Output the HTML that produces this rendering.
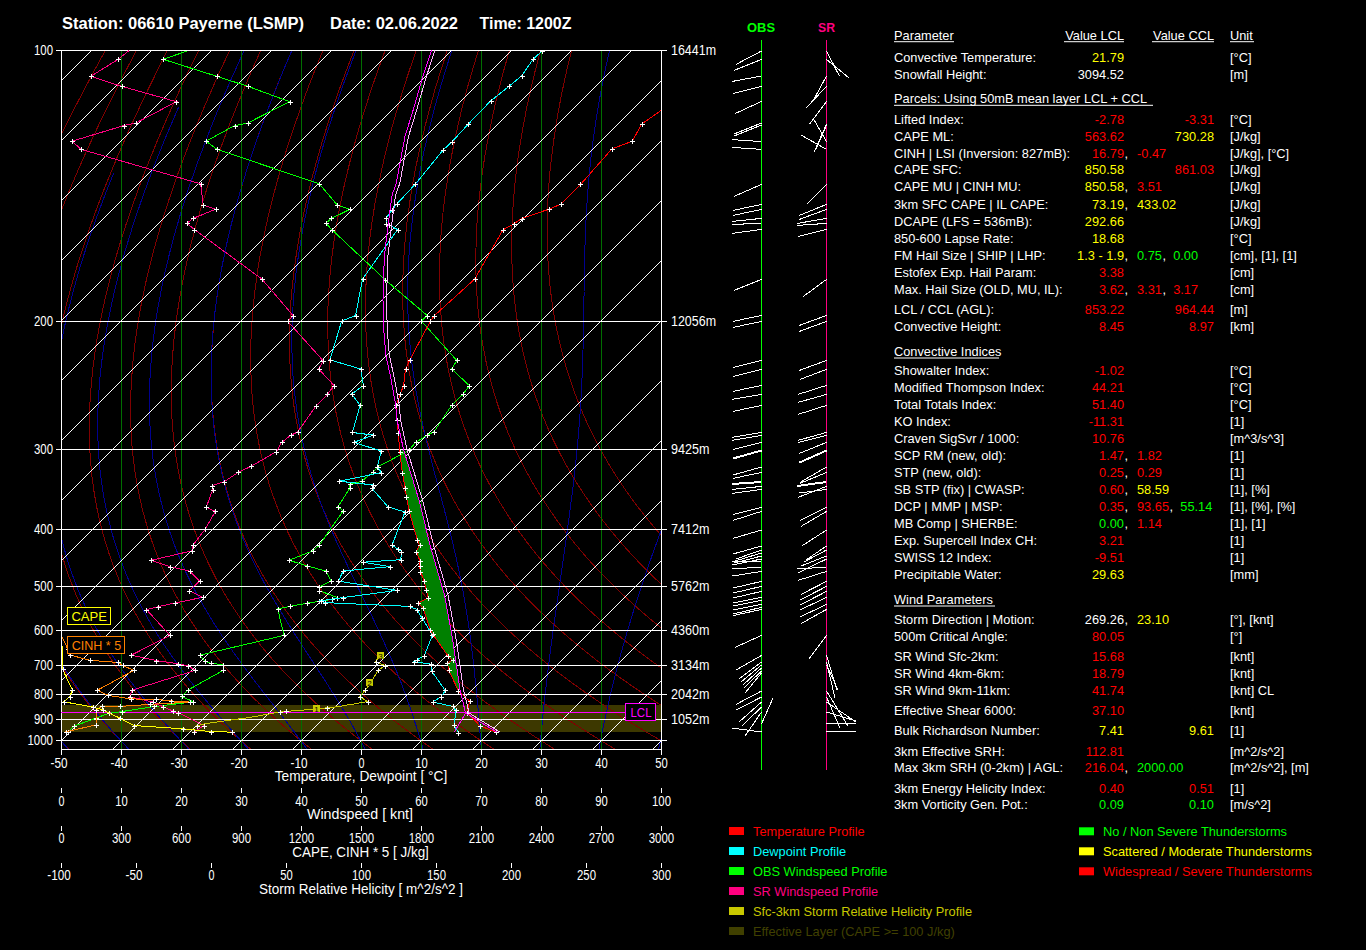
<!DOCTYPE html><html><head><meta charset="utf-8"><style>html,body{margin:0;padding:0;background:#000;width:1366px;height:950px;overflow:hidden;position:relative}</style></head><body><svg width="1366" height="950" viewBox="0 0 1366 950" style="position:absolute;left:0;top:0">
<defs><clipPath id="pc"><rect x="61" y="50" width="600" height="699.5"/></clipPath></defs>
<rect x="0" y="0" width="1366" height="950" fill="#000"/>
<g clip-path="url(#pc)" shape-rendering="crispEdges">
<rect x="61" y="705" width="600" height="27" fill="#3d3800"/>
<polyline points="118.4,27.1 105.9,49.4 94.5,70.3 84.1,89.8 74.5,108.3 65.7,125.6 57.6,142.1 50.2,157.6 43.3,172.4 37,186.5 31.1,199.9 25.6,212.7 20.6,224.9 15.9,236.6 11.5,247.8 7.5,258.6 3.7,268.9 0.2,278.9 -3.1,288.5 -6.1,297.7 -9,306.6 -11.6,315.2 -14,323.5 -16.3,331.6 -18.4,339.4 -20.4,346.9 -22.2,354.3 -23.9,361.4 -25.5,368.3 -26.9,375 -28.3,381.5 -29.5,387.8 -30.7,394 -31.7,400 -32.7,405.8 -33.6,411.5 -34.3,417.1 -35.1,422.5 -35.7,427.8 -36.3,433 -36.8,438 -37.3,443 -37.7,447.8 -38,452.5 -38.3,457.1 -38.6,461.7 -38.8,466.1 -38.9,470.4 -39.1,474.7 -39.1,478.8 -39.2,482.9 -39.2,486.9 -39.1,490.8 -39,494.7 -38.9,498.5 -38.8,502.2 -38.6,505.8 -38.4,509.4 -38.2,512.9 -37.9,516.4 -37.6,519.8 -37.3,523.1 -37,526.4 -36.7,529.7 -36.3,532.8 -35.9,536 -35.5,539 -35.1,542.1 -34.6,545.1 -34.1,548 -33.7,550.9 -33.2,553.8 -32.7,556.6 -32.1,559.3 -31.6,562.1 -31,564.8 -30.5,567.4 -29.9,570 -29.3,572.6 -28.7,575.2 -28.1,577.7 -27.4,580.1 -26.8,582.6 -26.1,585 -25.5,587.4 -24.8,589.7 -24.1,592.1 -23.4,594.4 -22.7,596.6 -22,598.9 -21.3,601.1 -20.6,603.3 -19.9,605.4 -19.2,607.6 -18.4,609.7 -17.7,611.8 -16.9,613.8 -16.2,615.9 -15.4,617.9 -14.6,619.9 -13.9,621.8 -13.1,623.8 -12.3,625.7 -11.5,627.6 -10.7,629.5 -9.9,631.4 -9.1,633.2 -8.3,635.1 -7.5,636.9 -6.7,638.7 -5.9,640.4 -5,642.2 -4.2,643.9 -3.4,645.7 -2.6,647.4 -1.7,649.1 -0.9,650.7 -0.1,652.4 0.8,654 1.6,655.7 2.5,657.3 3.3,658.9 4.2,660.5 5,662 5.9,663.6 6.7,665.1 7.6,666.7 8.4,668.2 9.3,669.7 10.2,671.2 11,672.6 11.9,674.1 12.8,675.5 13.6,677 14.5,678.4 15.4,679.8 16.2,681.2 17.1,682.6 18,684 18.8,685.4 19.7,686.7 20.6,688.1 21.5,689.4 22.3,690.7 23.2,692.1 24.1,693.4 25,694.7 25.9,696 26.7,697.2 27.6,698.5 28.5,699.8 29.4,701 30.2,702.3 31.1,703.5 32,704.7 32.9,705.9 33.8,707.1 34.6,708.3 35.5,709.5 36.4,710.7 37.3,711.9 38.2,713 39,714.2 39.9,715.3 40.8,716.5 41.7,717.6 42.6,718.7 43.4,719.8 44.3,721 45.2,722.1 46.1,723.2 46.9,724.2 47.8,725.3 48.7,726.4 49.6,727.5 50.4,728.5 51.3,729.6 52.2,730.6 53.1,731.7 53.9,732.7 54.8,733.7 55.7,734.8 56.6,735.8 57.4,736.8 58.3,737.8 59.2,738.8 60,739.8 60.9,740.8 61.8,741.8 62.7,742.7 63.5,743.7 64.4,744.7 65.2,745.6 66.1,746.6 67,747.5 67.8,748.5 68.7,749.4 69.6,750.3 70.4,751.3 71.3,752.2" fill="none" stroke="#800000" stroke-width="1" />
<polyline points="149.1,27.1 137,49.4 126,70.3 116,89.8 106.8,108.3 98.4,125.6 90.7,142.1 83.6,157.6 77.1,172.4 71.1,186.5 65.5,199.9 60.4,212.7 55.7,224.9 51.3,236.6 47.2,247.8 43.5,258.6 40,268.9 36.8,278.9 33.8,288.5 31,297.7 28.5,306.6 26.1,315.2 23.9,323.5 21.9,331.6 20.1,339.4 18.3,346.9 16.8,354.3 15.3,361.4 14,368.3 12.8,375 11.6,381.5 10.6,387.8 9.7,394 8.9,400 8.2,405.8 7.5,411.5 6.9,417.1 6.4,422.5 5.9,427.8 5.6,433 5.3,438 5,443 4.8,447.8 4.6,452.5 4.5,457.1 4.5,461.7 4.5,466.1 4.5,470.4 4.6,474.7 4.7,478.8 4.8,482.9 5,486.9 5.2,490.8 5.5,494.7 5.8,498.5 6.1,502.2 6.4,505.8 6.8,509.4 7.2,512.9 7.6,516.4 8.1,519.8 8.5,523.1 9,526.4 9.5,529.7 10.1,532.8 10.6,536 11.2,539 11.8,542.1 12.4,545.1 13,548 13.6,550.9 14.3,553.8 14.9,556.6 15.6,559.3 16.3,562.1 17,564.8 17.7,567.4 18.4,570 19.2,572.6 19.9,575.2 20.7,577.7 21.5,580.1 22.2,582.6 23,585 23.8,587.4 24.6,589.7 25.4,592.1 26.3,594.4 27.1,596.6 27.9,598.9 28.8,601.1 29.6,603.3 30.5,605.4 31.3,607.6 32.2,609.7 33.1,611.8 33.9,613.8 34.8,615.9 35.7,617.9 36.6,619.9 37.5,621.8 38.4,623.8 39.3,625.7 40.2,627.6 41.1,629.5 42,631.4 43,633.2 43.9,635.1 44.8,636.9 45.7,638.7 46.7,640.4 47.6,642.2 48.6,643.9 49.5,645.7 50.4,647.4 51.4,649.1 52.3,650.7 53.3,652.4 54.2,654 55.2,655.7 56.1,657.3 57.1,658.9 58.1,660.5 59,662 60,663.6 60.9,665.1 61.9,666.7 62.9,668.2 63.8,669.7 64.8,671.2 65.8,672.6 66.7,674.1 67.7,675.5 68.7,677 69.6,678.4 70.6,679.8 71.6,681.2 72.6,682.6 73.5,684 74.5,685.4 75.5,686.7 76.5,688.1 77.4,689.4 78.4,690.7 79.4,692.1 80.4,693.4 81.3,694.7 82.3,696 83.3,697.2 84.3,698.5 85.2,699.8 86.2,701 87.2,702.3 88.1,703.5 89.1,704.7 90.1,705.9 91.1,707.1 92,708.3 93,709.5 94,710.7 95,711.9 95.9,713 96.9,714.2 97.9,715.3 98.8,716.5 99.8,717.6 100.8,718.7 101.7,719.8 102.7,721 103.7,722.1 104.6,723.2 105.6,724.2 106.6,725.3 107.5,726.4 108.5,727.5 109.5,728.5 110.4,729.6 111.4,730.6 112.3,731.7 113.3,732.7 114.3,733.7 115.2,734.8 116.2,735.8 117.1,736.8 118.1,737.8 119,738.8 120,739.8 120.9,740.8 121.9,741.8 122.8,742.7 123.8,743.7 124.7,744.7 125.7,745.6 126.6,746.6 127.6,747.5 128.5,748.5 129.5,749.4 130.4,750.3 131.4,751.3 132.3,752.2" fill="none" stroke="#800000" stroke-width="1" />
<polyline points="179.7,27.1 168,49.4 157.5,70.3 147.9,89.8 139.1,108.3 131.1,125.6 123.8,142.1 117,157.6 110.9,172.4 105.2,186.5 100,199.9 95.2,212.7 90.8,224.9 86.7,236.6 83,247.8 79.5,258.6 76.3,268.9 73.4,278.9 70.7,288.5 68.2,297.7 65.9,306.6 63.8,315.2 61.9,323.5 60.2,331.6 58.5,339.4 57.1,346.9 55.7,354.3 54.5,361.4 53.4,368.3 52.5,375 51.6,381.5 50.8,387.8 50.1,394 49.5,400 49,405.8 48.5,411.5 48.2,417.1 47.9,422.5 47.6,427.8 47.5,433 47.3,438 47.3,443 47.3,447.8 47.3,452.5 47.4,457.1 47.5,461.7 47.7,466.1 47.9,470.4 48.2,474.7 48.5,478.8 48.8,482.9 49.2,486.9 49.6,490.8 50,494.7 50.5,498.5 51,502.2 51.5,505.8 52,509.4 52.6,512.9 53.2,516.4 53.8,519.8 54.4,523.1 55.1,526.4 55.7,529.7 56.4,532.8 57.1,536 57.8,539 58.6,542.1 59.3,545.1 60.1,548 60.9,550.9 61.7,553.8 62.5,556.6 63.3,559.3 64.2,562.1 65,564.8 65.9,567.4 66.7,570 67.6,572.6 68.5,575.2 69.4,577.7 70.3,580.1 71.2,582.6 72.2,585 73.1,587.4 74,589.7 75,592.1 75.9,594.4 76.9,596.6 77.9,598.9 78.8,601.1 79.8,603.3 80.8,605.4 81.8,607.6 82.8,609.7 83.8,611.8 84.8,613.8 85.8,615.9 86.8,617.9 87.8,619.9 88.8,621.8 89.9,623.8 90.9,625.7 91.9,627.6 93,629.5 94,631.4 95,633.2 96.1,635.1 97.1,636.9 98.2,638.7 99.2,640.4 100.3,642.2 101.3,643.9 102.4,645.7 103.4,647.4 104.5,649.1 105.6,650.7 106.6,652.4 107.7,654 108.7,655.7 109.8,657.3 110.9,658.9 111.9,660.5 113,662 114.1,663.6 115.2,665.1 116.2,666.7 117.3,668.2 118.4,669.7 119.4,671.2 120.5,672.6 121.6,674.1 122.7,675.5 123.7,677 124.8,678.4 125.9,679.8 127,681.2 128,682.6 129.1,684 130.2,685.4 131.2,686.7 132.3,688.1 133.4,689.4 134.5,690.7 135.5,692.1 136.6,693.4 137.7,694.7 138.8,696 139.8,697.2 140.9,698.5 142,699.8 143,701 144.1,702.3 145.2,703.5 146.2,704.7 147.3,705.9 148.4,707.1 149.4,708.3 150.5,709.5 151.6,710.7 152.6,711.9 153.7,713 154.8,714.2 155.8,715.3 156.9,716.5 157.9,717.6 159,718.7 160.1,719.8 161.1,721 162.2,722.1 163.2,723.2 164.3,724.2 165.3,725.3 166.4,726.4 167.4,727.5 168.5,728.5 169.5,729.6 170.6,730.6 171.6,731.7 172.7,732.7 173.7,733.7 174.7,734.8 175.8,735.8 176.8,736.8 177.9,737.8 178.9,738.8 179.9,739.8 181,740.8 182,741.8 183,742.7 184.1,743.7 185.1,744.7 186.1,745.6 187.2,746.6 188.2,747.5 189.2,748.5 190.2,749.4 191.3,750.3 192.3,751.3 193.3,752.2" fill="none" stroke="#800000" stroke-width="1" />
<polyline points="210.3,27.1 199.1,49.4 189,70.3 179.8,89.8 171.4,108.3 163.8,125.6 156.8,142.1 150.5,157.6 144.6,172.4 139.3,186.5 134.5,199.9 130,212.7 125.9,224.9 122.1,236.6 118.7,247.8 115.5,258.6 112.7,268.9 110,278.9 107.6,288.5 105.4,297.7 103.4,306.6 101.5,315.2 99.9,323.5 98.4,331.6 97,339.4 95.8,346.9 94.7,354.3 93.8,361.4 92.9,368.3 92.2,375 91.5,381.5 91,387.8 90.5,394 90.1,400 89.8,405.8 89.6,411.5 89.4,417.1 89.3,422.5 89.3,427.8 89.3,433 89.4,438 89.6,443 89.7,447.8 90,452.5 90.3,457.1 90.6,461.7 91,466.1 91.4,470.4 91.8,474.7 92.3,478.8 92.8,482.9 93.4,486.9 93.9,490.8 94.5,494.7 95.2,498.5 95.8,502.2 96.5,505.8 97.2,509.4 98,512.9 98.7,516.4 99.5,519.8 100.3,523.1 101.1,526.4 101.9,529.7 102.8,532.8 103.6,536 104.5,539 105.4,542.1 106.3,545.1 107.2,548 108.2,550.9 109.1,553.8 110.1,556.6 111.1,559.3 112,562.1 113,564.8 114,567.4 115.1,570 116.1,572.6 117.1,575.2 118.2,577.7 119.2,580.1 120.3,582.6 121.3,585 122.4,587.4 123.5,589.7 124.5,592.1 125.6,594.4 126.7,596.6 127.8,598.9 128.9,601.1 130,603.3 131.2,605.4 132.3,607.6 133.4,609.7 134.5,611.8 135.6,613.8 136.8,615.9 137.9,617.9 139.1,619.9 140.2,621.8 141.3,623.8 142.5,625.7 143.6,627.6 144.8,629.5 146,631.4 147.1,633.2 148.3,635.1 149.4,636.9 150.6,638.7 151.8,640.4 152.9,642.2 154.1,643.9 155.3,645.7 156.4,647.4 157.6,649.1 158.8,650.7 160,652.4 161.1,654 162.3,655.7 163.5,657.3 164.7,658.9 165.8,660.5 167,662 168.2,663.6 169.4,665.1 170.5,666.7 171.7,668.2 172.9,669.7 174.1,671.2 175.3,672.6 176.4,674.1 177.6,675.5 178.8,677 180,678.4 181.1,679.8 182.3,681.2 183.5,682.6 184.7,684 185.8,685.4 187,686.7 188.2,688.1 189.4,689.4 190.5,690.7 191.7,692.1 192.9,693.4 194,694.7 195.2,696 196.4,697.2 197.5,698.5 198.7,699.8 199.9,701 201,702.3 202.2,703.5 203.4,704.7 204.5,705.9 205.7,707.1 206.8,708.3 208,709.5 209.2,710.7 210.3,711.9 211.5,713 212.6,714.2 213.8,715.3 214.9,716.5 216.1,717.6 217.2,718.7 218.4,719.8 219.5,721 220.7,722.1 221.8,723.2 222.9,724.2 224.1,725.3 225.2,726.4 226.4,727.5 227.5,728.5 228.6,729.6 229.8,730.6 230.9,731.7 232,732.7 233.1,733.7 234.3,734.8 235.4,735.8 236.5,736.8 237.6,737.8 238.8,738.8 239.9,739.8 241,740.8 242.1,741.8 243.2,742.7 244.4,743.7 245.5,744.7 246.6,745.6 247.7,746.6 248.8,747.5 249.9,748.5 251,749.4 252.1,750.3 253.2,751.3 254.3,752.2" fill="none" stroke="#800000" stroke-width="1" />
<polyline points="240.9,27.1 230.2,49.4 220.4,70.3 211.7,89.8 203.7,108.3 196.4,125.6 189.9,142.1 183.9,157.6 178.4,172.4 173.4,186.5 168.9,199.9 164.8,212.7 161,224.9 157.6,236.6 154.4,247.8 151.6,258.6 149,268.9 146.6,278.9 144.5,288.5 142.6,297.7 140.8,306.6 139.3,315.2 137.9,323.5 136.6,331.6 135.5,339.4 134.6,346.9 133.7,354.3 133,361.4 132.4,368.3 131.9,375 131.4,381.5 131.1,387.8 130.9,394 130.7,400 130.6,405.8 130.6,411.5 130.7,417.1 130.8,422.5 131,427.8 131.2,433 131.5,438 131.8,443 132.2,447.8 132.7,452.5 133.1,457.1 133.7,461.7 134.2,466.1 134.8,470.4 135.4,474.7 136.1,478.8 136.8,482.9 137.5,486.9 138.3,490.8 139.1,494.7 139.9,498.5 140.7,502.2 141.6,505.8 142.4,509.4 143.3,512.9 144.3,516.4 145.2,519.8 146.2,523.1 147.1,526.4 148.1,529.7 149.1,532.8 150.2,536 151.2,539 152.2,542.1 153.3,545.1 154.4,548 155.5,550.9 156.6,553.8 157.7,556.6 158.8,559.3 159.9,562.1 161.1,564.8 162.2,567.4 163.4,570 164.5,572.6 165.7,575.2 166.9,577.7 168.1,580.1 169.3,582.6 170.5,585 171.7,587.4 172.9,589.7 174.1,592.1 175.3,594.4 176.5,596.6 177.8,598.9 179,601.1 180.3,603.3 181.5,605.4 182.7,607.6 184,609.7 185.2,611.8 186.5,613.8 187.8,615.9 189,617.9 190.3,619.9 191.6,621.8 192.8,623.8 194.1,625.7 195.4,627.6 196.6,629.5 197.9,631.4 199.2,633.2 200.5,635.1 201.7,636.9 203,638.7 204.3,640.4 205.6,642.2 206.9,643.9 208.2,645.7 209.4,647.4 210.7,649.1 212,650.7 213.3,652.4 214.6,654 215.9,655.7 217.2,657.3 218.4,658.9 219.7,660.5 221,662 222.3,663.6 223.6,665.1 224.9,666.7 226.1,668.2 227.4,669.7 228.7,671.2 230,672.6 231.3,674.1 232.6,675.5 233.8,677 235.1,678.4 236.4,679.8 237.7,681.2 238.9,682.6 240.2,684 241.5,685.4 242.8,686.7 244,688.1 245.3,689.4 246.6,690.7 247.9,692.1 249.1,693.4 250.4,694.7 251.7,696 252.9,697.2 254.2,698.5 255.4,699.8 256.7,701 258,702.3 259.2,703.5 260.5,704.7 261.7,705.9 263,707.1 264.2,708.3 265.5,709.5 266.7,710.7 268,711.9 269.2,713 270.5,714.2 271.7,715.3 273,716.5 274.2,717.6 275.4,718.7 276.7,719.8 277.9,721 279.1,722.1 280.4,723.2 281.6,724.2 282.8,725.3 284.1,726.4 285.3,727.5 286.5,728.5 287.7,729.6 288.9,730.6 290.2,731.7 291.4,732.7 292.6,733.7 293.8,734.8 295,735.8 296.2,736.8 297.4,737.8 298.6,738.8 299.8,739.8 301,740.8 302.2,741.8 303.4,742.7 304.6,743.7 305.8,744.7 307,745.6 308.2,746.6 309.4,747.5 310.6,748.5 311.8,749.4 313,750.3 314.1,751.3 315.3,752.2" fill="none" stroke="#800000" stroke-width="1" />
<polyline points="271.6,27.1 261.2,49.4 251.9,70.3 243.6,89.8 236,108.3 229.1,125.6 222.9,142.1 217.3,157.6 212.2,172.4 207.6,186.5 203.4,199.9 199.6,212.7 196.1,224.9 193,236.6 190.1,247.8 187.6,258.6 185.3,268.9 183.2,278.9 181.4,288.5 179.7,297.7 178.3,306.6 177,315.2 175.8,323.5 174.9,331.6 174,339.4 173.3,346.9 172.7,354.3 172.2,361.4 171.8,368.3 171.6,375 171.4,381.5 171.3,387.8 171.3,394 171.3,400 171.5,405.8 171.7,411.5 171.9,417.1 172.3,422.5 172.7,427.8 173.1,433 173.6,438 174.1,443 174.7,447.8 175.3,452.5 176,457.1 176.7,461.7 177.5,466.1 178.3,470.4 179.1,474.7 179.9,478.8 180.8,482.9 181.7,486.9 182.6,490.8 183.6,494.7 184.6,498.5 185.6,502.2 186.6,505.8 187.7,509.4 188.7,512.9 189.8,516.4 190.9,519.8 192,523.1 193.2,526.4 194.3,529.7 195.5,532.8 196.7,536 197.9,539 199.1,542.1 200.3,545.1 201.5,548 202.8,550.9 204,553.8 205.3,556.6 206.5,559.3 207.8,562.1 209.1,564.8 210.4,567.4 211.7,570 213,572.6 214.3,575.2 215.6,577.7 216.9,580.1 218.3,582.6 219.6,585 221,587.4 222.3,589.7 223.7,592.1 225,594.4 226.4,596.6 227.7,598.9 229.1,601.1 230.5,603.3 231.8,605.4 233.2,607.6 234.6,609.7 236,611.8 237.4,613.8 238.7,615.9 240.1,617.9 241.5,619.9 242.9,621.8 244.3,623.8 245.7,625.7 247.1,627.6 248.5,629.5 249.9,631.4 251.3,633.2 252.7,635.1 254.1,636.9 255.5,638.7 256.8,640.4 258.2,642.2 259.6,643.9 261,645.7 262.4,647.4 263.8,649.1 265.2,650.7 266.6,652.4 268,654 269.4,655.7 270.8,657.3 272.2,658.9 273.6,660.5 275,662 276.4,663.6 277.8,665.1 279.2,666.7 280.6,668.2 282,669.7 283.3,671.2 284.7,672.6 286.1,674.1 287.5,675.5 288.9,677 290.3,678.4 291.7,679.8 293,681.2 294.4,682.6 295.8,684 297.2,685.4 298.5,686.7 299.9,688.1 301.3,689.4 302.6,690.7 304,692.1 305.4,693.4 306.7,694.7 308.1,696 309.5,697.2 310.8,698.5 312.2,699.8 313.5,701 314.9,702.3 316.2,703.5 317.6,704.7 318.9,705.9 320.3,707.1 321.6,708.3 323,709.5 324.3,710.7 325.7,711.9 327,713 328.3,714.2 329.7,715.3 331,716.5 332.3,717.6 333.7,718.7 335,719.8 336.3,721 337.6,722.1 338.9,723.2 340.3,724.2 341.6,725.3 342.9,726.4 344.2,727.5 345.5,728.5 346.8,729.6 348.1,730.6 349.4,731.7 350.7,732.7 352,733.7 353.3,734.8 354.6,735.8 355.9,736.8 357.2,737.8 358.5,738.8 359.8,739.8 361.1,740.8 362.4,741.8 363.6,742.7 364.9,743.7 366.2,744.7 367.5,745.6 368.7,746.6 370,747.5 371.3,748.5 372.5,749.4 373.8,750.3 375.1,751.3 376.3,752.2" fill="none" stroke="#800000" stroke-width="1" />
<polyline points="302.2,27.1 292.3,49.4 283.4,70.3 275.4,89.8 268.3,108.3 261.8,125.6 256,142.1 250.7,157.6 246,172.4 241.7,186.5 237.8,199.9 234.3,212.7 231.2,224.9 228.4,236.6 225.9,247.8 223.6,258.6 221.6,268.9 219.8,278.9 218.3,288.5 216.9,297.7 215.7,306.6 214.7,315.2 213.8,323.5 213.1,331.6 212.5,339.4 212,346.9 211.7,354.3 211.4,361.4 211.3,368.3 211.3,375 211.3,381.5 211.4,387.8 211.6,394 211.9,400 212.3,405.8 212.7,411.5 213.2,417.1 213.7,422.5 214.3,427.8 215,433 215.7,438 216.4,443 217.2,447.8 218,452.5 218.9,457.1 219.8,461.7 220.7,466.1 221.7,470.4 222.7,474.7 223.7,478.8 224.8,482.9 225.9,486.9 227,490.8 228.1,494.7 229.3,498.5 230.5,502.2 231.6,505.8 232.9,509.4 234.1,512.9 235.4,516.4 236.6,519.8 237.9,523.1 239.2,526.4 240.5,529.7 241.8,532.8 243.2,536 244.5,539 245.9,542.1 247.3,545.1 248.6,548 250,550.9 251.4,553.8 252.8,556.6 254.3,559.3 255.7,562.1 257.1,564.8 258.5,567.4 260,570 261.4,572.6 262.9,575.2 264.4,577.7 265.8,580.1 267.3,582.6 268.8,585 270.2,587.4 271.7,589.7 273.2,592.1 274.7,594.4 276.2,596.6 277.7,598.9 279.2,601.1 280.7,603.3 282.2,605.4 283.7,607.6 285.2,609.7 286.7,611.8 288.2,613.8 289.7,615.9 291.2,617.9 292.7,619.9 294.3,621.8 295.8,623.8 297.3,625.7 298.8,627.6 300.3,629.5 301.8,631.4 303.3,633.2 304.8,635.1 306.4,636.9 307.9,638.7 309.4,640.4 310.9,642.2 312.4,643.9 313.9,645.7 315.4,647.4 317,649.1 318.5,650.7 320,652.4 321.5,654 323,655.7 324.5,657.3 326,658.9 327.5,660.5 329,662 330.5,663.6 332,665.1 333.5,666.7 335,668.2 336.5,669.7 338,671.2 339.5,672.6 341,674.1 342.5,675.5 343.9,677 345.4,678.4 346.9,679.8 348.4,681.2 349.9,682.6 351.3,684 352.8,685.4 354.3,686.7 355.8,688.1 357.2,689.4 358.7,690.7 360.2,692.1 361.6,693.4 363.1,694.7 364.6,696 366,697.2 367.5,698.5 368.9,699.8 370.4,701 371.8,702.3 373.3,703.5 374.7,704.7 376.2,705.9 377.6,707.1 379,708.3 380.5,709.5 381.9,710.7 383.3,711.9 384.8,713 386.2,714.2 387.6,715.3 389,716.5 390.5,717.6 391.9,718.7 393.3,719.8 394.7,721 396.1,722.1 397.5,723.2 398.9,724.2 400.3,725.3 401.7,726.4 403.1,727.5 404.5,728.5 405.9,729.6 407.3,730.6 408.7,731.7 410.1,732.7 411.5,733.7 412.9,734.8 414.2,735.8 415.6,736.8 417,737.8 418.4,738.8 419.7,739.8 421.1,740.8 422.5,741.8 423.8,742.7 425.2,743.7 426.5,744.7 427.9,745.6 429.3,746.6 430.6,747.5 432,748.5 433.3,749.4 434.6,750.3 436,751.3 437.3,752.2" fill="none" stroke="#800000" stroke-width="1" />
<polyline points="332.8,27.1 323.4,49.4 314.9,70.3 307.3,89.8 300.6,108.3 294.5,125.6 289,142.1 284.1,157.6 279.7,172.4 275.8,186.5 272.3,199.9 269.1,212.7 266.3,224.9 263.8,236.6 261.6,247.8 259.6,258.6 257.9,268.9 256.5,278.9 255.2,288.5 254.1,297.7 253.2,306.6 252.4,315.2 251.8,323.5 251.3,331.6 251,339.4 250.8,346.9 250.7,354.3 250.7,361.4 250.8,368.3 251,375 251.2,381.5 251.6,387.8 252,394 252.5,400 253.1,405.8 253.8,411.5 254.4,417.1 255.2,422.5 256,427.8 256.9,433 257.8,438 258.7,443 259.7,447.8 260.7,452.5 261.8,457.1 262.9,461.7 264,466.1 265.1,470.4 266.3,474.7 267.5,478.8 268.8,482.9 270,486.9 271.3,490.8 272.6,494.7 274,498.5 275.3,502.2 276.7,505.8 278.1,509.4 279.5,512.9 280.9,516.4 282.3,519.8 283.8,523.1 285.2,526.4 286.7,529.7 288.2,532.8 289.7,536 291.2,539 292.7,542.1 294.2,545.1 295.8,548 297.3,550.9 298.9,553.8 300.4,556.6 302,559.3 303.6,562.1 305.1,564.8 306.7,567.4 308.3,570 309.9,572.6 311.5,575.2 313.1,577.7 314.7,580.1 316.3,582.6 317.9,585 319.5,587.4 321.1,589.7 322.8,592.1 324.4,594.4 326,596.6 327.6,598.9 329.3,601.1 330.9,603.3 332.5,605.4 334.2,607.6 335.8,609.7 337.4,611.8 339.1,613.8 340.7,615.9 342.3,617.9 344,619.9 345.6,621.8 347.2,623.8 348.9,625.7 350.5,627.6 352.1,629.5 353.8,631.4 355.4,633.2 357,635.1 358.7,636.9 360.3,638.7 361.9,640.4 363.6,642.2 365.2,643.9 366.8,645.7 368.4,647.4 370.1,649.1 371.7,650.7 373.3,652.4 374.9,654 376.5,655.7 378.2,657.3 379.8,658.9 381.4,660.5 383,662 384.6,663.6 386.2,665.1 387.8,666.7 389.4,668.2 391,669.7 392.6,671.2 394.2,672.6 395.8,674.1 397.4,675.5 399,677 400.6,678.4 402.2,679.8 403.8,681.2 405.3,682.6 406.9,684 408.5,685.4 410.1,686.7 411.6,688.1 413.2,689.4 414.8,690.7 416.3,692.1 417.9,693.4 419.5,694.7 421,696 422.6,697.2 424.1,698.5 425.7,699.8 427.2,701 428.8,702.3 430.3,703.5 431.8,704.7 433.4,705.9 434.9,707.1 436.4,708.3 438,709.5 439.5,710.7 441,711.9 442.5,713 444.1,714.2 445.6,715.3 447.1,716.5 448.6,717.6 450.1,718.7 451.6,719.8 453.1,721 454.6,722.1 456.1,723.2 457.6,724.2 459.1,725.3 460.6,726.4 462.1,727.5 463.5,728.5 465,729.6 466.5,730.6 468,731.7 469.4,732.7 470.9,733.7 472.4,734.8 473.8,735.8 475.3,736.8 476.8,737.8 478.2,738.8 479.7,739.8 481.1,740.8 482.6,741.8 484,742.7 485.5,743.7 486.9,744.7 488.3,745.6 489.8,746.6 491.2,747.5 492.6,748.5 494.1,749.4 495.5,750.3 496.9,751.3 498.3,752.2" fill="none" stroke="#800000" stroke-width="1" />
<polyline points="363.4,27.1 354.4,49.4 346.4,70.3 339.2,89.8 332.9,108.3 327.2,125.6 322.1,142.1 317.6,157.6 313.5,172.4 309.9,186.5 306.7,199.9 303.9,212.7 301.4,224.9 299.2,236.6 297.3,247.8 295.7,258.6 294.3,268.9 293.1,278.9 292.1,288.5 291.2,297.7 290.6,306.6 290.1,315.2 289.8,323.5 289.6,331.6 289.5,339.4 289.5,346.9 289.6,354.3 289.9,361.4 290.2,368.3 290.7,375 291.2,381.5 291.8,387.8 292.4,394 293.2,400 293.9,405.8 294.8,411.5 295.7,417.1 296.7,422.5 297.7,427.8 298.7,433 299.8,438 301,443 302.2,447.8 303.4,452.5 304.6,457.1 305.9,461.7 307.2,466.1 308.6,470.4 310,474.7 311.4,478.8 312.8,482.9 314.2,486.9 315.7,490.8 317.2,494.7 318.7,498.5 320.2,502.2 321.7,505.8 323.3,509.4 324.9,512.9 326.4,516.4 328,519.8 329.7,523.1 331.3,526.4 332.9,529.7 334.6,532.8 336.2,536 337.9,539 339.5,542.1 341.2,545.1 342.9,548 344.6,550.9 346.3,553.8 348,556.6 349.7,559.3 351.4,562.1 353.2,564.8 354.9,567.4 356.6,570 358.3,572.6 360.1,575.2 361.8,577.7 363.6,580.1 365.3,582.6 367.1,585 368.8,587.4 370.6,589.7 372.3,592.1 374.1,594.4 375.8,596.6 377.6,598.9 379.4,601.1 381.1,603.3 382.9,605.4 384.6,607.6 386.4,609.7 388.2,611.8 389.9,613.8 391.7,615.9 393.4,617.9 395.2,619.9 397,621.8 398.7,623.8 400.5,625.7 402.2,627.6 404,629.5 405.7,631.4 407.5,633.2 409.2,635.1 411,636.9 412.7,638.7 414.5,640.4 416.2,642.2 418,643.9 419.7,645.7 421.4,647.4 423.2,649.1 424.9,650.7 426.6,652.4 428.4,654 430.1,655.7 431.8,657.3 433.6,658.9 435.3,660.5 437,662 438.7,663.6 440.4,665.1 442.1,666.7 443.8,668.2 445.6,669.7 447.3,671.2 449,672.6 450.7,674.1 452.4,675.5 454,677 455.7,678.4 457.4,679.8 459.1,681.2 460.8,682.6 462.5,684 464.2,685.4 465.8,686.7 467.5,688.1 469.2,689.4 470.8,690.7 472.5,692.1 474.2,693.4 475.8,694.7 477.5,696 479.1,697.2 480.8,698.5 482.4,699.8 484,701 485.7,702.3 487.3,703.5 489,704.7 490.6,705.9 492.2,707.1 493.8,708.3 495.5,709.5 497.1,710.7 498.7,711.9 500.3,713 501.9,714.2 503.5,715.3 505.1,716.5 506.7,717.6 508.3,718.7 509.9,719.8 511.5,721 513.1,722.1 514.7,723.2 516.3,724.2 517.8,725.3 519.4,726.4 521,727.5 522.6,728.5 524.1,729.6 525.7,730.6 527.2,731.7 528.8,732.7 530.4,733.7 531.9,734.8 533.5,735.8 535,736.8 536.6,737.8 538.1,738.8 539.6,739.8 541.2,740.8 542.7,741.8 544.2,742.7 545.7,743.7 547.3,744.7 548.8,745.6 550.3,746.6 551.8,747.5 553.3,748.5 554.8,749.4 556.3,750.3 557.8,751.3 559.3,752.2" fill="none" stroke="#800000" stroke-width="1" />
<polyline points="394.1,27.1 385.5,49.4 377.9,70.3 371.1,89.8 365.2,108.3 359.8,125.6 355.1,142.1 351,157.6 347.3,172.4 344,186.5 341.2,199.9 338.7,212.7 336.5,224.9 334.7,236.6 333.1,247.8 331.7,258.6 330.6,268.9 329.7,278.9 329,288.5 328.4,297.7 328,306.6 327.8,315.2 327.7,323.5 327.8,331.6 328,339.4 328.2,346.9 328.6,354.3 329.1,361.4 329.7,368.3 330.4,375 331.1,381.5 331.9,387.8 332.8,394 333.8,400 334.8,405.8 335.8,411.5 337,417.1 338.1,422.5 339.4,427.8 340.6,433 341.9,438 343.3,443 344.6,447.8 346.1,452.5 347.5,457.1 349,461.7 350.5,466.1 352,470.4 353.6,474.7 355.2,478.8 356.8,482.9 358.4,486.9 360,490.8 361.7,494.7 363.4,498.5 365.1,502.2 366.8,505.8 368.5,509.4 370.2,512.9 372,516.4 373.8,519.8 375.5,523.1 377.3,526.4 379.1,529.7 380.9,532.8 382.7,536 384.5,539 386.4,542.1 388.2,545.1 390,548 391.9,550.9 393.7,553.8 395.6,556.6 397.4,559.3 399.3,562.1 401.2,564.8 403.1,567.4 404.9,570 406.8,572.6 408.7,575.2 410.6,577.7 412.4,580.1 414.3,582.6 416.2,585 418.1,587.4 420,589.7 421.9,592.1 423.8,594.4 425.7,596.6 427.6,598.9 429.4,601.1 431.3,603.3 433.2,605.4 435.1,607.6 437,609.7 438.9,611.8 440.8,613.8 442.7,615.9 444.5,617.9 446.4,619.9 448.3,621.8 450.2,623.8 452.1,625.7 453.9,627.6 455.8,629.5 457.7,631.4 459.6,633.2 461.4,635.1 463.3,636.9 465.2,638.7 467,640.4 468.9,642.2 470.7,643.9 472.6,645.7 474.4,647.4 476.3,649.1 478.1,650.7 480,652.4 481.8,654 483.7,655.7 485.5,657.3 487.3,658.9 489.2,660.5 491,662 492.8,663.6 494.6,665.1 496.5,666.7 498.3,668.2 500.1,669.7 501.9,671.2 503.7,672.6 505.5,674.1 507.3,675.5 509.1,677 510.9,678.4 512.7,679.8 514.5,681.2 516.3,682.6 518,684 519.8,685.4 521.6,686.7 523.4,688.1 525.1,689.4 526.9,690.7 528.7,692.1 530.4,693.4 532.2,694.7 533.9,696 535.7,697.2 537.4,698.5 539.1,699.8 540.9,701 542.6,702.3 544.3,703.5 546.1,704.7 547.8,705.9 549.5,707.1 551.2,708.3 553,709.5 554.7,710.7 556.4,711.9 558.1,713 559.8,714.2 561.5,715.3 563.2,716.5 564.9,717.6 566.5,718.7 568.2,719.8 569.9,721 571.6,722.1 573.3,723.2 574.9,724.2 576.6,725.3 578.3,726.4 579.9,727.5 581.6,728.5 583.2,729.6 584.9,730.6 586.5,731.7 588.2,732.7 589.8,733.7 591.4,734.8 593.1,735.8 594.7,736.8 596.3,737.8 598,738.8 599.6,739.8 601.2,740.8 602.8,741.8 604.4,742.7 606,743.7 607.6,744.7 609.2,745.6 610.8,746.6 612.4,747.5 614,748.5 615.6,749.4 617.2,750.3 618.8,751.3 620.4,752.2" fill="none" stroke="#800000" stroke-width="1" />
<polyline points="424.7,27.1 416.6,49.4 409.4,70.3 403,89.8 397.5,108.3 392.5,125.6 388.2,142.1 384.4,157.6 381.1,172.4 378.2,186.5 375.6,199.9 373.5,212.7 371.6,224.9 370.1,236.6 368.8,247.8 367.7,258.6 366.9,268.9 366.3,278.9 365.8,288.5 365.6,297.7 365.5,306.6 365.5,315.2 365.7,323.5 366,331.6 366.4,339.4 367,346.9 367.6,354.3 368.3,361.4 369.2,368.3 370.1,375 371,381.5 372.1,387.8 373.2,394 374.4,400 375.6,405.8 376.9,411.5 378.2,417.1 379.6,422.5 381,427.8 382.5,433 384,438 385.6,443 387.1,447.8 388.7,452.5 390.4,457.1 392,461.7 393.7,466.1 395.5,470.4 397.2,474.7 399,478.8 400.8,482.9 402.6,486.9 404.4,490.8 406.2,494.7 408.1,498.5 409.9,502.2 411.8,505.8 413.7,509.4 415.6,512.9 417.5,516.4 419.5,519.8 421.4,523.1 423.4,526.4 425.3,529.7 427.3,532.8 429.2,536 431.2,539 433.2,542.1 435.2,545.1 437.2,548 439.2,550.9 441.2,553.8 443.2,556.6 445.2,559.3 447.2,562.1 449.2,564.8 451.2,567.4 453.2,570 455.3,572.6 457.3,575.2 459.3,577.7 461.3,580.1 463.3,582.6 465.4,585 467.4,587.4 469.4,589.7 471.4,592.1 473.5,594.4 475.5,596.6 477.5,598.9 479.5,601.1 481.5,603.3 483.6,605.4 485.6,607.6 487.6,609.7 489.6,611.8 491.6,613.8 493.6,615.9 495.6,617.9 497.7,619.9 499.7,621.8 501.7,623.8 503.7,625.7 505.7,627.6 507.6,629.5 509.6,631.4 511.6,633.2 513.6,635.1 515.6,636.9 517.6,638.7 519.6,640.4 521.5,642.2 523.5,643.9 525.5,645.7 527.4,647.4 529.4,649.1 531.4,650.7 533.3,652.4 535.3,654 537.2,655.7 539.2,657.3 541.1,658.9 543.1,660.5 545,662 546.9,663.6 548.9,665.1 550.8,666.7 552.7,668.2 554.6,669.7 556.5,671.2 558.4,672.6 560.4,674.1 562.3,675.5 564.2,677 566.1,678.4 567.9,679.8 569.8,681.2 571.7,682.6 573.6,684 575.5,685.4 577.4,686.7 579.2,688.1 581.1,689.4 583,690.7 584.8,692.1 586.7,693.4 588.5,694.7 590.4,696 592.2,697.2 594.1,698.5 595.9,699.8 597.7,701 599.5,702.3 601.4,703.5 603.2,704.7 605,705.9 606.8,707.1 608.6,708.3 610.4,709.5 612.2,710.7 614,711.9 615.8,713 617.6,714.2 619.4,715.3 621.2,716.5 623,717.6 624.8,718.7 626.5,719.8 628.3,721 630.1,722.1 631.8,723.2 633.6,724.2 635.3,725.3 637.1,726.4 638.8,727.5 640.6,728.5 642.3,729.6 644.1,730.6 645.8,731.7 647.5,732.7 649.2,733.7 651,734.8 652.7,735.8 654.4,736.8 656.1,737.8 657.8,738.8 659.5,739.8 661.2,740.8 662.9,741.8 664.6,742.7 666.3,743.7 668,744.7 669.7,745.6 671.4,746.6 673,747.5 674.7,748.5 676.4,749.4 678,750.3 679.7,751.3 681.4,752.2" fill="none" stroke="#800000" stroke-width="1" />
<polyline points="455.3,27.1 447.6,49.4 440.9,70.3 434.9,89.8 429.8,108.3 425.2,125.6 421.3,142.1 417.8,157.6 414.8,172.4 412.3,186.5 410.1,199.9 408.3,212.7 406.7,224.9 405.5,236.6 404.5,247.8 403.8,258.6 403.2,268.9 402.9,278.9 402.7,288.5 402.8,297.7 402.9,306.6 403.2,315.2 403.7,323.5 404.3,331.6 404.9,339.4 405.7,346.9 406.6,354.3 407.6,361.4 408.6,368.3 409.8,375 411,381.5 412.2,387.8 413.6,394 415,400 416.4,405.8 417.9,411.5 419.5,417.1 421.1,422.5 422.7,427.8 424.4,433 426.1,438 427.8,443 429.6,447.8 431.4,452.5 433.3,457.1 435.1,461.7 437,466.1 438.9,470.4 440.8,474.7 442.8,478.8 444.7,482.9 446.7,486.9 448.7,490.8 450.7,494.7 452.8,498.5 454.8,502.2 456.9,505.8 458.9,509.4 461,512.9 463.1,516.4 465.2,519.8 467.3,523.1 469.4,526.4 471.5,529.7 473.6,532.8 475.8,536 477.9,539 480,542.1 482.2,545.1 484.3,548 486.5,550.9 488.6,553.8 490.8,556.6 492.9,559.3 495.1,562.1 497.2,564.8 499.4,567.4 501.5,570 503.7,572.6 505.9,575.2 508,577.7 510.2,580.1 512.4,582.6 514.5,585 516.7,587.4 518.8,589.7 521,592.1 523.2,594.4 525.3,596.6 527.5,598.9 529.6,601.1 531.8,603.3 533.9,605.4 536.1,607.6 538.2,609.7 540.3,611.8 542.5,613.8 544.6,615.9 546.7,617.9 548.9,619.9 551,621.8 553.1,623.8 555.3,625.7 557.4,627.6 559.5,629.5 561.6,631.4 563.7,633.2 565.8,635.1 567.9,636.9 570,638.7 572.1,640.4 574.2,642.2 576.3,643.9 578.4,645.7 580.4,647.4 582.5,649.1 584.6,650.7 586.7,652.4 588.7,654 590.8,655.7 592.8,657.3 594.9,658.9 596.9,660.5 599,662 601,663.6 603.1,665.1 605.1,666.7 607.1,668.2 609.1,669.7 611.2,671.2 613.2,672.6 615.2,674.1 617.2,675.5 619.2,677 621.2,678.4 623.2,679.8 625.2,681.2 627.2,682.6 629.2,684 631.1,685.4 633.1,686.7 635.1,688.1 637.1,689.4 639,690.7 641,692.1 642.9,693.4 644.9,694.7 646.8,696 648.8,697.2 650.7,698.5 652.6,699.8 654.6,701 656.5,702.3 658.4,703.5 660.3,704.7 662.2,705.9 664.1,707.1 666,708.3 667.9,709.5 669.8,710.7 671.7,711.9 673.6,713 675.5,714.2 677.4,715.3 679.2,716.5 681.1,717.6 683,718.7 684.8,719.8 686.7,721 688.6,722.1 690.4,723.2 692.3,724.2 694.1,725.3 695.9,726.4 697.8,727.5 699.6,728.5 701.4,729.6 703.2,730.6 705.1,731.7 706.9,732.7 708.7,733.7 710.5,734.8 712.3,735.8 714.1,736.8 715.9,737.8 717.7,738.8 719.5,739.8 721.3,740.8 723,741.8 724.8,742.7 726.6,743.7 728.4,744.7 730.1,745.6 731.9,746.6 733.6,747.5 735.4,748.5 737.1,749.4 738.9,750.3 740.6,751.3 742.4,752.2" fill="none" stroke="#800000" stroke-width="1" />
<polyline points="485.9,27.1 478.7,49.4 472.4,70.3 466.8,89.8 462,108.3 457.9,125.6 454.3,142.1 451.2,157.6 448.6,172.4 446.4,186.5 444.5,199.9 443,212.7 441.8,224.9 440.9,236.6 440.2,247.8 439.8,258.6 439.5,268.9 439.5,278.9 439.6,288.5 439.9,297.7 440.4,306.6 441,315.2 441.7,323.5 442.5,331.6 443.4,339.4 444.5,346.9 445.6,354.3 446.8,361.4 448.1,368.3 449.5,375 450.9,381.5 452.4,387.8 454,394 455.6,400 457.3,405.8 459,411.5 460.7,417.1 462.5,422.5 464.4,427.8 466.3,433 468.2,438 470.1,443 472.1,447.8 474.1,452.5 476.1,457.1 478.2,461.7 480.3,466.1 482.3,470.4 484.5,474.7 486.6,478.8 488.7,482.9 490.9,486.9 493.1,490.8 495.3,494.7 497.5,498.5 499.7,502.2 501.9,505.8 504.1,509.4 506.4,512.9 508.6,516.4 510.9,519.8 513.2,523.1 515.4,526.4 517.7,529.7 520,532.8 522.3,536 524.6,539 526.8,542.1 529.1,545.1 531.4,548 533.7,550.9 536,553.8 538.3,556.6 540.6,559.3 542.9,562.1 545.2,564.8 547.6,567.4 549.9,570 552.2,572.6 554.5,575.2 556.8,577.7 559.1,580.1 561.4,582.6 563.7,585 566,587.4 568.3,589.7 570.6,592.1 572.8,594.4 575.1,596.6 577.4,598.9 579.7,601.1 582,603.3 584.3,605.4 586.5,607.6 588.8,609.7 591.1,611.8 593.3,613.8 595.6,615.9 597.9,617.9 600.1,619.9 602.4,621.8 604.6,623.8 606.8,625.7 609.1,627.6 611.3,629.5 613.6,631.4 615.8,633.2 618,635.1 620.2,636.9 622.4,638.7 624.6,640.4 626.9,642.2 629.1,643.9 631.3,645.7 633.4,647.4 635.6,649.1 637.8,650.7 640,652.4 642.2,654 644.3,655.7 646.5,657.3 648.7,658.9 650.8,660.5 653,662 655.1,663.6 657.3,665.1 659.4,666.7 661.6,668.2 663.7,669.7 665.8,671.2 667.9,672.6 670,674.1 672.2,675.5 674.3,677 676.4,678.4 678.5,679.8 680.6,681.2 682.6,682.6 684.7,684 686.8,685.4 688.9,686.7 690.9,688.1 693,689.4 695.1,690.7 697.1,692.1 699.2,693.4 701.2,694.7 703.3,696 705.3,697.2 707.3,698.5 709.4,699.8 711.4,701 713.4,702.3 715.4,703.5 717.4,704.7 719.4,705.9 721.4,707.1 723.4,708.3 725.4,709.5 727.4,710.7 729.4,711.9 731.4,713 733.3,714.2 735.3,715.3 737.3,716.5 739.2,717.6 741.2,718.7 743.2,719.8 745.1,721 747,722.1 749,723.2 750.9,724.2 752.8,725.3 754.8,726.4 756.7,727.5 758.6,728.5 760.5,729.6 762.4,730.6 764.3,731.7 766.2,732.7 768.1,733.7 770,734.8 771.9,735.8 773.8,736.8 775.7,737.8 777.5,738.8 779.4,739.8 781.3,740.8 783.1,741.8 785,742.7 786.9,743.7 788.7,744.7 790.6,745.6 792.4,746.6 794.2,747.5 796.1,748.5 797.9,749.4 799.7,750.3 801.6,751.3 803.4,752.2" fill="none" stroke="#800000" stroke-width="1" />
<polyline points="516.6,27.1 509.7,49.4 503.8,70.3 498.7,89.8 494.3,108.3 490.6,125.6 487.4,142.1 484.6,157.6 482.4,172.4 480.5,186.5 479,199.9 477.8,212.7 476.9,224.9 476.3,236.6 476,247.8 475.8,258.6 475.9,268.9 476.1,278.9 476.5,288.5 477.1,297.7 477.8,306.6 478.7,315.2 479.6,323.5 480.7,331.6 481.9,339.4 483.2,346.9 484.6,354.3 486,361.4 487.6,368.3 489.2,375 490.8,381.5 492.6,387.8 494.4,394 496.2,400 498.1,405.8 500,411.5 502,417.1 504,422.5 506.1,427.8 508.1,433 510.3,438 512.4,443 514.6,447.8 516.8,452.5 519,457.1 521.2,461.7 523.5,466.1 525.8,470.4 528.1,474.7 530.4,478.8 532.7,482.9 535.1,486.9 537.4,490.8 539.8,494.7 542.2,498.5 544.6,502.2 547,505.8 549.4,509.4 551.8,512.9 554.2,516.4 556.6,519.8 559,523.1 561.5,526.4 563.9,529.7 566.3,532.8 568.8,536 571.2,539 573.7,542.1 576.1,545.1 578.6,548 581,550.9 583.5,553.8 585.9,556.6 588.4,559.3 590.8,562.1 593.3,564.8 595.7,567.4 598.2,570 600.6,572.6 603.1,575.2 605.5,577.7 607.9,580.1 610.4,582.6 612.8,585 615.2,587.4 617.7,589.7 620.1,592.1 622.5,594.4 625,596.6 627.4,598.9 629.8,601.1 632.2,603.3 634.6,605.4 637,607.6 639.4,609.7 641.8,611.8 644.2,613.8 646.6,615.9 649,617.9 651.3,619.9 653.7,621.8 656.1,623.8 658.4,625.7 660.8,627.6 663.2,629.5 665.5,631.4 667.9,633.2 670.2,635.1 672.5,636.9 674.9,638.7 677.2,640.4 679.5,642.2 681.8,643.9 684.1,645.7 686.4,647.4 688.7,649.1 691,650.7 693.3,652.4 695.6,654 697.9,655.7 700.2,657.3 702.5,658.9 704.7,660.5 707,662 709.2,663.6 711.5,665.1 713.7,666.7 716,668.2 718.2,669.7 720.4,671.2 722.7,672.6 724.9,674.1 727.1,675.5 729.3,677 731.5,678.4 733.7,679.8 735.9,681.2 738.1,682.6 740.3,684 742.5,685.4 744.6,686.7 746.8,688.1 749,689.4 751.1,690.7 753.3,692.1 755.4,693.4 757.6,694.7 759.7,696 761.9,697.2 764,698.5 766.1,699.8 768.2,701 770.3,702.3 772.4,703.5 774.6,704.7 776.7,705.9 778.7,707.1 780.8,708.3 782.9,709.5 785,710.7 787.1,711.9 789.1,713 791.2,714.2 793.3,715.3 795.3,716.5 797.4,717.6 799.4,718.7 801.5,719.8 803.5,721 805.5,722.1 807.6,723.2 809.6,724.2 811.6,725.3 813.6,726.4 815.6,727.5 817.6,728.5 819.6,729.6 821.6,730.6 823.6,731.7 825.6,732.7 827.6,733.7 829.6,734.8 831.5,735.8 833.5,736.8 835.5,737.8 837.4,738.8 839.4,739.8 841.3,740.8 843.3,741.8 845.2,742.7 847.1,743.7 849.1,744.7 851,745.6 852.9,746.6 854.8,747.5 856.8,748.5 858.7,749.4 860.6,750.3 862.5,751.3 864.4,752.2" fill="none" stroke="#800000" stroke-width="1" />
<polyline points="547.2,27.1 540.8,49.4 535.3,70.3 530.6,89.8 526.6,108.3 523.3,125.6 520.4,142.1 518.1,157.6 516.2,172.4 514.6,186.5 513.5,199.9 512.6,212.7 512,224.9 511.7,236.6 511.7,247.8 511.8,258.6 512.2,268.9 512.7,278.9 513.4,288.5 514.3,297.7 515.3,306.6 516.4,315.2 517.6,323.5 519,331.6 520.4,339.4 521.9,346.9 523.6,354.3 525.3,361.4 527,368.3 528.9,375 530.8,381.5 532.7,387.8 534.7,394 536.8,400 538.9,405.8 541.1,411.5 543.2,417.1 545.5,422.5 547.7,427.8 550,433 552.3,438 554.7,443 557.1,447.8 559.5,452.5 561.9,457.1 564.3,461.7 566.8,466.1 569.2,470.4 571.7,474.7 574.2,478.8 576.7,482.9 579.2,486.9 581.8,490.8 584.3,494.7 586.9,498.5 589.4,502.2 592,505.8 594.6,509.4 597.1,512.9 599.7,516.4 602.3,519.8 604.9,523.1 607.5,526.4 610.1,529.7 612.7,532.8 615.3,536 617.9,539 620.5,542.1 623.1,545.1 625.7,548 628.3,550.9 630.9,553.8 633.5,556.6 636.1,559.3 638.7,562.1 641.3,564.8 643.9,567.4 646.5,570 649.1,572.6 651.7,575.2 654.2,577.7 656.8,580.1 659.4,582.6 662,585 664.5,587.4 667.1,589.7 669.7,592.1 672.2,594.4 674.8,596.6 677.3,598.9 679.9,601.1 682.4,603.3 684.9,605.4 687.5,607.6 690,609.7 692.5,611.8 695,613.8 697.6,615.9 700.1,617.9 702.6,619.9 705.1,621.8 707.5,623.8 710,625.7 712.5,627.6 715,629.5 717.5,631.4 719.9,633.2 722.4,635.1 724.8,636.9 727.3,638.7 729.7,640.4 732.2,642.2 734.6,643.9 737,645.7 739.4,647.4 741.9,649.1 744.3,650.7 746.7,652.4 749.1,654 751.5,655.7 753.9,657.3 756.2,658.9 758.6,660.5 761,662 763.3,663.6 765.7,665.1 768.1,666.7 770.4,668.2 772.7,669.7 775.1,671.2 777.4,672.6 779.7,674.1 782.1,675.5 784.4,677 786.7,678.4 789,679.8 791.3,681.2 793.6,682.6 795.9,684 798.1,685.4 800.4,686.7 802.7,688.1 804.9,689.4 807.2,690.7 809.4,692.1 811.7,693.4 813.9,694.7 816.2,696 818.4,697.2 820.6,698.5 822.8,699.8 825.1,701 827.3,702.3 829.5,703.5 831.7,704.7 833.9,705.9 836.1,707.1 838.2,708.3 840.4,709.5 842.6,710.7 844.8,711.9 846.9,713 849.1,714.2 851.2,715.3 853.4,716.5 855.5,717.6 857.6,718.7 859.8,719.8 861.9,721 864,722.1 866.1,723.2 868.2,724.2 870.4,725.3 872.5,726.4 874.5,727.5 876.6,728.5 878.7,729.6 880.8,730.6 882.9,731.7 885,732.7 887,733.7 889.1,734.8 891.1,735.8 893.2,736.8 895.2,737.8 897.3,738.8 899.3,739.8 901.3,740.8 903.4,741.8 905.4,742.7 907.4,743.7 909.4,744.7 911.4,745.6 913.5,746.6 915.5,747.5 917.4,748.5 919.4,749.4 921.4,750.3 923.4,751.3 925.4,752.2" fill="none" stroke="#800000" stroke-width="1" />
<polyline points="577.8,27.1 571.9,49.4 566.8,70.3 562.5,89.8 558.9,108.3 555.9,125.6 553.5,142.1 551.5,157.6 549.9,172.4 548.7,186.5 547.9,199.9 547.4,212.7 547.2,224.9 547.2,236.6 547.4,247.8 547.9,258.6 548.5,268.9 549.3,278.9 550.3,288.5 551.4,297.7 552.7,306.6 554.1,315.2 555.6,323.5 557.2,331.6 558.9,339.4 560.7,346.9 562.5,354.3 564.5,361.4 566.5,368.3 568.6,375 570.7,381.5 572.9,387.8 575.1,394 577.4,400 579.7,405.8 582.1,411.5 584.5,417.1 586.9,422.5 589.4,427.8 591.9,433 594.4,438 597,443 599.5,447.8 602.1,452.5 604.7,457.1 607.4,461.7 610,466.1 612.7,470.4 615.3,474.7 618,478.8 620.7,482.9 623.4,486.9 626.1,490.8 628.8,494.7 631.6,498.5 634.3,502.2 637,505.8 639.8,509.4 642.5,512.9 645.3,516.4 648,519.8 650.8,523.1 653.5,526.4 656.3,529.7 659,532.8 661.8,536 664.6,539 667.3,542.1 670.1,545.1 672.8,548 675.6,550.9 678.3,553.8 681.1,556.6 683.8,559.3 686.6,562.1 689.3,564.8 692.1,567.4 694.8,570 697.5,572.6 700.2,575.2 703,577.7 705.7,580.1 708.4,582.6 711.1,585 713.8,587.4 716.5,589.7 719.2,592.1 721.9,594.4 724.6,596.6 727.3,598.9 730,601.1 732.6,603.3 735.3,605.4 737.9,607.6 740.6,609.7 743.3,611.8 745.9,613.8 748.5,615.9 751.2,617.9 753.8,619.9 756.4,621.8 759,623.8 761.6,625.7 764.2,627.6 766.8,629.5 769.4,631.4 772,633.2 774.6,635.1 777.1,636.9 779.7,638.7 782.3,640.4 784.8,642.2 787.4,643.9 789.9,645.7 792.4,647.4 795,649.1 797.5,650.7 800,652.4 802.5,654 805,655.7 807.5,657.3 810,658.9 812.5,660.5 815,662 817.4,663.6 819.9,665.1 822.4,666.7 824.8,668.2 827.3,669.7 829.7,671.2 832.2,672.6 834.6,674.1 837,675.5 839.4,677 841.8,678.4 844.2,679.8 846.6,681.2 849,682.6 851.4,684 853.8,685.4 856.2,686.7 858.5,688.1 860.9,689.4 863.3,690.7 865.6,692.1 868,693.4 870.3,694.7 872.6,696 874.9,697.2 877.3,698.5 879.6,699.8 881.9,701 884.2,702.3 886.5,703.5 888.8,704.7 891.1,705.9 893.4,707.1 895.6,708.3 897.9,709.5 900.2,710.7 902.4,711.9 904.7,713 906.9,714.2 909.2,715.3 911.4,716.5 913.6,717.6 915.9,718.7 918.1,719.8 920.3,721 922.5,722.1 924.7,723.2 926.9,724.2 929.1,725.3 931.3,726.4 933.5,727.5 935.7,728.5 937.8,729.6 940,730.6 942.2,731.7 944.3,732.7 946.5,733.7 948.6,734.8 950.7,735.8 952.9,736.8 955,737.8 957.1,738.8 959.3,739.8 961.4,740.8 963.5,741.8 965.6,742.7 967.7,743.7 969.8,744.7 971.9,745.6 974,746.6 976.1,747.5 978.1,748.5 980.2,749.4 982.3,750.3 984.3,751.3 986.4,752.2" fill="none" stroke="#800000" stroke-width="1" />
<polyline points="-2.2,287.9 -3.4,291.8 -4.7,295.6 -5.9,299.3 -7.1,303 -8.2,306.6 -9.3,310.2 -10.4,313.8 -11.4,317.2 -12.5,320.7 -13.4,324.1 -14.4,327.4 -15.3,330.7 -16.2,334 -17.1,337.2 -18,340.4 -18.8,343.5 -19.6,346.6 -20.3,349.6 -21.1,352.6 -21.8,355.6 -22.5,358.6 -23.2,361.5 -23.9,364.3 -24.5,367.2 -25.1,370 -25.7,372.7 -26.3,375.5 -26.9,378.2 -27.4,380.8 -28,383.5 -28.5,386.1 -29,388.7 -29.4,391.2 -29.9,393.8 -31.2,401.2 -32.3,408.3 -33.4,415.3 -34.3,422.1 -35.1,428.6 -35.8,435 -36.4,441.1 -36.9,447.1 -37.4,453 -37.7,458.7 -38,464.2 -38.2,469.6 -38.3,474.9 -38.4,480 -38.4,485 -38.4,489.9 -38.3,494.7 -38.2,499.4 -38,503.9 -37.8,508.4 -37.5,512.8 -37.2,517 -36.8,521.2 -36.4,525.3 -36,529.3 -35.5,533.3 -35.1,537.1 -34.5,540.9 -34,544.6 -33.4,548.2 -32.8,551.8 -32.2,555.3 -31.5,558.8 -30.9,562.2 -30.2,565.5 -29.5,568.7 -28.8,572 -28,575.1 -27.2,578.2 -26.5,581.3 -25.7,584.3 -24.8,587.2 -24,590.1 -23.2,593 -22.3,595.8 -21.5,598.6 -20.6,601.3 -19.7,604 -18.8,606.7 -17.9,609.3 -17,611.9 -16,614.4 -15.1,617 -14.2,619.4 -13.2,621.9 -12.2,624.3 -11.3,626.7 -10.3,629 -9.3,631.3 -8.3,633.6 -7.3,635.9 -6.3,638.1 -5.3,640.3 -4.3,642.5 -3.3,644.6 -2.3,646.7 -1.2,648.8 -0.2,650.9 0.8,653 1.9,655 2.9,657 4,659 5,660.9 6,662.9 7.1,664.8 8.2,666.7 9.2,668.5 10.3,670.4 11.3,672.2 12.4,674 13.5,675.8 14.5,677.6 15.6,679.4 16.7,681.1 17.7,682.8 18.8,684.5 19.9,686.2 21,687.9 22,689.5 23.1,691.2 24.2,692.8 25.3,694.4 26.3,696 27.4,697.6 28.5,699.1 29.6,700.7 30.7,702.2 31.7,703.8 32.8,705.3 33.9,706.8 35,708.2 36.1,709.7 37.1,711.2 38.2,712.6 39.3,714 40.4,715.5 41.4,716.9 42.5,718.3 43.6,719.7 44.6,721 45.7,722.4 46.8,723.7 47.9,725.1 48.9,726.4 50,727.7 51.1,729.1 52.1,730.4 53.2,731.6 54.2,732.9 55.3,734.2 56.4,735.5 57.4,736.7 58.5,738 59.5,739.2 60.6,740.4 61.6,741.6 62.7,742.8 63.7,744 64.8,745.2 65.8,746.4 66.9,747.6 67.9,748.7 69,749.9 70,751 71,752.2" fill="none" stroke="#000090" stroke-width="1" />
<polyline points="54.5,231.7 52.8,236.5 51.1,241.2 49.4,245.8 47.8,250.3 46.2,254.8 44.7,259.2 43.3,263.5 41.9,267.7 40.5,271.9 39.2,276 37.9,280 36.6,284 35.4,287.9 34.3,291.8 33.1,295.6 32,299.3 31,303 29.9,306.6 29,310.2 28,313.8 27.1,317.2 26.2,320.7 25.3,324.1 24.4,327.4 23.6,330.7 22.8,334 22.1,337.2 21.3,340.4 20.6,343.5 19.9,346.6 19.2,349.6 18.6,352.6 18,355.6 17.4,358.6 16.8,361.5 16.2,364.3 15.7,367.2 15.2,370 14.7,372.7 14.2,375.5 13.7,378.2 13.3,380.8 12.8,383.5 12.4,386.1 12,388.7 11.6,391.2 11.3,393.8 10.3,401.2 9.4,408.3 8.6,415.3 8,422.1 7.4,428.6 7,435 6.6,441.1 6.3,447.1 6.2,453 6,458.7 6,464.2 6,469.6 6.1,474.9 6.3,480 6.5,485 6.7,489.9 7.1,494.7 7.4,499.4 7.8,503.9 8.3,508.4 8.8,512.8 9.3,517 9.8,521.2 10.4,525.3 11.1,529.3 11.7,533.3 12.4,537.1 13.1,540.9 13.9,544.6 14.6,548.2 15.4,551.8 16.2,555.3 17.1,558.8 17.9,562.2 18.8,565.5 19.7,568.7 20.6,572 21.5,575.1 22.5,578.2 23.4,581.3 24.4,584.3 25.4,587.2 26.4,590.1 27.4,593 28.4,595.8 29.4,598.6 30.5,601.3 31.5,604 32.6,606.7 33.6,609.3 34.7,611.9 35.8,614.4 36.9,617 38,619.4 39.1,621.9 40.2,624.3 41.3,626.7 42.5,629 43.6,631.3 44.7,633.6 45.9,635.9 47,638.1 48.2,640.3 49.3,642.5 50.5,644.6 51.6,646.7 52.8,648.8 54,650.9 55.1,653 56.3,655 57.5,657 58.7,659 59.8,660.9 61,662.9 62.2,664.8 63.4,666.7 64.6,668.5 65.7,670.4 66.9,672.2 68.1,674 69.3,675.8 70.5,677.6 71.7,679.4 72.9,681.1 74.1,682.8 75.2,684.5 76.4,686.2 77.6,687.9 78.8,689.5 80,691.2 81.2,692.8 82.4,694.4 83.6,696 84.7,697.6 85.9,699.1 87.1,700.7 88.3,702.2 89.5,703.8 90.6,705.3 91.8,706.8 93,708.2 94.2,709.7 95.3,711.2 96.5,712.6 97.7,714 98.9,715.5 100,716.9 101.2,718.3 102.3,719.7 103.5,721 104.7,722.4 105.8,723.7 107,725.1 108.1,726.4 109.3,727.7 110.4,729.1 111.5,730.4 112.7,731.6 113.8,732.9 115,734.2 116.1,735.5 117.2,736.7 118.3,738 119.5,739.2 120.6,740.4 121.7,741.6 122.8,742.8 123.9,744 125,745.2 126.1,746.4 127.2,747.6 128.3,748.7 129.4,749.9 130.5,751 131.6,752.2" fill="none" stroke="#000090" stroke-width="1" />
<polyline points="113.7,173 111.3,178.9 109,184.7 106.8,190.3 104.7,195.8 102.6,201.3 100.6,206.6 98.7,211.8 96.8,216.9 95,221.9 93.3,226.9 91.6,231.7 89.9,236.5 88.4,241.2 86.8,245.8 85.4,250.3 83.9,254.8 82.6,259.2 81.2,263.5 79.9,267.7 78.7,271.9 77.5,276 76.3,280 75.2,284 74.1,287.9 73.1,291.8 72.1,295.6 71.1,299.3 70.2,303 69.2,306.6 68.4,310.2 67.5,313.8 66.7,317.2 65.9,320.7 65.1,324.1 64.4,327.4 63.7,330.7 63,334 62.4,337.2 61.7,340.4 61.1,343.5 60.5,346.6 60,349.6 59.4,352.6 58.9,355.6 58.4,358.6 57.9,361.5 57.5,364.3 57.1,367.2 56.6,370 56.2,372.7 55.8,375.5 55.5,378.2 55.1,380.8 54.8,383.5 54.5,386.1 54.2,388.7 53.9,391.2 53.6,393.8 52.9,401.2 52.3,408.3 51.8,415.3 51.5,422.1 51.2,428.6 51,435 50.9,441.1 50.9,447.1 51,453 51.1,458.7 51.3,464.2 51.6,469.6 51.9,474.9 52.3,480 52.7,485 53.2,489.9 53.8,494.7 54.4,499.4 55,503.9 55.6,508.4 56.4,512.8 57.1,517 57.9,521.2 58.7,525.3 59.5,529.3 60.4,533.3 61.3,537.1 62.2,540.9 63.1,544.6 64.1,548.2 65.1,551.8 66.1,555.3 67.1,558.8 68.1,562.2 69.2,565.5 70.3,568.7 71.4,572 72.5,575.1 73.6,578.2 74.7,581.3 75.9,584.3 77,587.2 78.2,590.1 79.4,593 80.6,595.8 81.7,598.6 83,601.3 84.2,604 85.4,606.7 86.6,609.3 87.9,611.9 89.1,614.4 90.3,617 91.6,619.4 92.9,621.9 94.1,624.3 95.4,626.7 96.7,629 97.9,631.3 99.2,633.6 100.5,635.9 101.8,638.1 103.1,640.3 104.4,642.5 105.7,644.6 107,646.7 108.3,648.8 109.5,650.9 110.8,653 112.1,655 113.4,657 114.7,659 116,660.9 117.3,662.9 118.6,664.8 119.9,666.7 121.2,668.5 122.5,670.4 123.8,672.2 125.1,674 126.4,675.8 127.7,677.6 129,679.4 130.3,681.1 131.6,682.8 132.9,684.5 134.2,686.2 135.5,687.9 136.7,689.5 138,691.2 139.3,692.8 140.6,694.4 141.8,696 143.1,697.6 144.4,699.1 145.6,700.7 146.9,702.2 148.2,703.8 149.4,705.3 150.7,706.8 151.9,708.2 153.2,709.7 154.4,711.2 155.6,712.6 156.9,714 158.1,715.5 159.3,716.9 160.5,718.3 161.7,719.7 163,721 164.2,722.4 165.4,723.7 166.6,725.1 167.8,726.4 169,727.7 170.1,729.1 171.3,730.4 172.5,731.6 173.7,732.9 174.8,734.2 176,735.5 177.2,736.7 178.3,738 179.4,739.2 180.6,740.4 181.7,741.6 182.9,742.8 184,744 185.1,745.2 186.2,746.4 187.3,747.6 188.4,748.7 189.5,749.9 190.6,751 191.7,752.2" fill="none" stroke="#000090" stroke-width="1" />
<polyline points="178.8,106.8 175.6,114.1 172.5,121.3 169.5,128.3 166.6,135.1 163.8,141.8 161.2,148.3 158.6,154.7 156.1,160.9 153.7,167 151.4,173 149.2,178.9 147.1,184.7 145,190.3 143,195.8 141.1,201.3 139.3,206.6 137.5,211.8 135.8,216.9 134.1,221.9 132.5,226.9 131,231.7 129.5,236.5 128.1,241.2 126.7,245.8 125.3,250.3 124.1,254.8 122.8,259.2 121.6,263.5 120.5,267.7 119.4,271.9 118.3,276 117.3,280 116.3,284 115.3,287.9 114.4,291.8 113.5,295.6 112.7,299.3 111.8,303 111.1,306.6 110.3,310.2 109.6,313.8 108.9,317.2 108.2,320.7 107.6,324.1 107,327.4 106.4,330.7 105.8,334 105.3,337.2 104.8,340.4 104.3,343.5 103.8,346.6 103.3,349.6 102.9,352.6 102.5,355.6 102.1,358.6 101.8,361.5 101.4,364.3 101.1,367.2 100.8,370 100.5,372.7 100.2,375.5 99.9,378.2 99.7,380.8 99.5,383.5 99.3,386.1 99.1,388.7 98.9,391.2 98.7,393.8 98.3,401.2 98,408.3 97.8,415.3 97.7,422.1 97.8,428.6 97.9,435 98,441.1 98.3,447.1 98.6,453 99,458.7 99.5,464.2 100,469.6 100.6,474.9 101.3,480 102,485 102.7,489.9 103.5,494.7 104.3,499.4 105.2,503.9 106.1,508.4 107,512.8 108,517 109,521.2 110,525.3 111,529.3 112.1,533.3 113.2,537.1 114.3,540.9 115.5,544.6 116.7,548.2 117.9,551.8 119.1,555.3 120.3,558.8 121.5,562.2 122.8,565.5 124,568.7 125.3,572 126.6,575.1 127.9,578.2 129.2,581.3 130.6,584.3 131.9,587.2 133.2,590.1 134.6,593 135.9,595.8 137.3,598.6 138.7,601.3 140.1,604 141.4,606.7 142.8,609.3 144.2,611.9 145.6,614.4 147,617 148.4,619.4 149.8,621.9 151.2,624.3 152.6,626.7 154,629 155.5,631.3 156.9,633.6 158.3,635.9 159.7,638.1 161.1,640.3 162.5,642.5 163.9,644.6 165.3,646.7 166.8,648.8 168.2,650.9 169.6,653 171,655 172.4,657 173.8,659 175.2,660.9 176.6,662.9 178,664.8 179.3,666.7 180.7,668.5 182.1,670.4 183.5,672.2 184.9,674 186.2,675.8 187.6,677.6 189,679.4 190.3,681.1 191.7,682.8 193,684.5 194.4,686.2 195.7,687.9 197,689.5 198.4,691.2 199.7,692.8 201,694.4 202.3,696 203.6,697.6 204.9,699.1 206.2,700.7 207.5,702.2 208.7,703.8 210,705.3 211.3,706.8 212.5,708.2 213.8,709.7 215,711.2 216.3,712.6 217.5,714 218.7,715.5 219.9,716.9 221.2,718.3 222.4,719.7 223.6,721 224.7,722.4 225.9,723.7 227.1,725.1 228.3,726.4 229.4,727.7 230.6,729.1 231.7,730.4 232.8,731.6 234,732.9 235.1,734.2 236.2,735.5 237.3,736.7 238.4,738 239.5,739.2 240.6,740.4 241.7,741.6 242.7,742.8 243.8,744 244.8,745.2 245.9,746.4 246.9,747.6 248,748.7 249,749.9 250,751 251,752.2" fill="none" stroke="#000090" stroke-width="1" />
<polyline points="248.6,41.1 244.4,50.1 240.3,58.8 236.5,67.3 232.8,75.6 229.2,83.7 225.8,91.6 222.5,99.3 219.4,106.8 216.3,114.1 213.4,121.3 210.6,128.3 208,135.1 205.4,141.8 202.9,148.3 200.5,154.7 198.2,160.9 196,167 193.9,173 191.9,178.9 189.9,184.7 188,190.3 186.2,195.8 184.5,201.3 182.8,206.6 181.2,211.8 179.6,216.9 178.2,221.9 176.7,226.9 175.3,231.7 174,236.5 172.7,241.2 171.5,245.8 170.3,250.3 169.2,254.8 168.1,259.2 167.1,263.5 166.1,267.7 165.1,271.9 164.2,276 163.3,280 162.5,284 161.7,287.9 160.9,291.8 160.2,295.6 159.5,299.3 158.8,303 158.1,306.6 157.5,310.2 156.9,313.8 156.4,317.2 155.8,320.7 155.3,324.1 154.9,327.4 154.4,330.7 154,334 153.6,337.2 153.2,340.4 152.8,343.5 152.5,346.6 152.2,349.6 151.9,352.6 151.6,355.6 151.3,358.6 151.1,361.5 150.9,364.3 150.6,367.2 150.5,370 150.3,372.7 150.1,375.5 150,378.2 149.9,380.8 149.8,383.5 149.7,386.1 149.6,388.7 149.5,391.2 149.5,393.8 149.4,401.2 149.5,408.3 149.6,415.3 149.8,422.1 150.2,428.6 150.6,435 151.1,441.1 151.7,447.1 152.3,453 153,458.7 153.8,464.2 154.6,469.6 155.5,474.9 156.4,480 157.3,485 158.4,489.9 159.4,494.7 160.5,499.4 161.6,503.9 162.8,508.4 164,512.8 165.2,517 166.4,521.2 167.7,525.3 169,529.3 170.3,533.3 171.6,537.1 173,540.9 174.3,544.6 175.7,548.2 177.1,551.8 178.5,555.3 180,558.8 181.4,562.2 182.9,565.5 184.3,568.7 185.8,572 187.3,575.1 188.8,578.2 190.3,581.3 191.8,584.3 193.3,587.2 194.8,590.1 196.3,593 197.8,595.8 199.4,598.6 200.9,601.3 202.4,604 203.9,606.7 205.5,609.3 207,611.9 208.5,614.4 210,617 211.6,619.4 213.1,621.9 214.6,624.3 216.1,626.7 217.6,629 219.1,631.3 220.6,633.6 222.1,635.9 223.6,638.1 225.1,640.3 226.6,642.5 228.1,644.6 229.6,646.7 231,648.8 232.5,650.9 233.9,653 235.4,655 236.8,657 238.3,659 239.7,660.9 241.1,662.9 242.5,664.8 243.9,666.7 245.3,668.5 246.7,670.4 248.1,672.2 249.4,674 250.8,675.8 252.1,677.6 253.5,679.4 254.8,681.1 256.1,682.8 257.4,684.5 258.7,686.2 260,687.9 261.3,689.5 262.6,691.2 263.8,692.8 265.1,694.4 266.3,696 267.5,697.6 268.8,699.1 270,700.7 271.2,702.2 272.4,703.8 273.5,705.3 274.7,706.8 275.9,708.2 277,709.7 278.1,711.2 279.3,712.6 280.4,714 281.5,715.5 282.6,716.9 283.7,718.3 284.7,719.7 285.8,721 286.9,722.4 287.9,723.7 288.9,725.1 290,726.4 291,727.7 292,729.1 293,730.4 294,731.6 294.9,732.9 295.9,734.2 296.9,735.5 297.8,736.7 298.7,738 299.7,739.2 300.6,740.4 301.5,741.6 302.4,742.8 303.3,744 304.2,745.2 305,746.4 305.9,747.6 306.8,748.7 307.6,749.9 308.5,751 309.3,752.2" fill="none" stroke="#000090" stroke-width="1" />
<polyline points="304.5,22.3 300.2,31.8 296,41.1 292.1,50.1 288.3,58.8 284.7,67.3 281.3,75.6 278,83.7 274.8,91.6 271.8,99.3 268.9,106.8 266.1,114.1 263.5,121.3 260.9,128.3 258.5,135.1 256.1,141.8 253.9,148.3 251.7,154.7 249.7,160.9 247.7,167 245.8,173 244,178.9 242.2,184.7 240.6,190.3 239,195.8 237.4,201.3 236,206.6 234.6,211.8 233.2,216.9 231.9,221.9 230.7,226.9 229.5,231.7 228.4,236.5 227.3,241.2 226.3,245.8 225.3,250.3 224.4,254.8 223.5,259.2 222.6,263.5 221.8,267.7 221,271.9 220.3,276 219.6,280 218.9,284 218.3,287.9 217.7,291.8 217.1,295.6 216.6,299.3 216.1,303 215.6,306.6 215.2,310.2 214.7,313.8 214.4,317.2 214,320.7 213.6,324.1 213.3,327.4 213,330.7 212.8,334 212.5,337.2 212.3,340.4 212.1,343.5 211.9,346.6 211.7,349.6 211.6,352.6 211.5,355.6 211.4,358.6 211.3,361.5 211.2,364.3 211.2,367.2 211.1,370 211.1,372.7 211.1,375.5 211.1,378.2 211.1,380.8 211.1,383.5 211.2,386.1 211.3,388.7 211.3,391.2 211.4,393.8 211.8,401.2 212.2,408.3 212.8,415.3 213.4,422.1 214.1,428.6 214.9,435 215.8,441.1 216.7,447.1 217.7,453 218.8,458.7 219.9,464.2 221.1,469.6 222.3,474.9 223.5,480 224.8,485 226.1,489.9 227.5,494.7 228.9,499.4 230.3,503.9 231.7,508.4 233.2,512.8 234.7,517 236.2,521.2 237.7,525.3 239.3,529.3 240.8,533.3 242.4,537.1 244,540.9 245.6,544.6 247.2,548.2 248.8,551.8 250.4,555.3 252,558.8 253.6,562.2 255.3,565.5 256.9,568.7 258.5,572 260.2,575.1 261.8,578.2 263.4,581.3 265,584.3 266.7,587.2 268.3,590.1 269.9,593 271.5,595.8 273.1,598.6 274.7,601.3 276.3,604 277.9,606.7 279.4,609.3 281,611.9 282.5,614.4 284.1,617 285.6,619.4 287.1,621.9 288.6,624.3 290.1,626.7 291.6,629 293.1,631.3 294.5,633.6 296,635.9 297.4,638.1 298.8,640.3 300.2,642.5 301.6,644.6 303,646.7 304.3,648.8 305.7,650.9 307,653 308.3,655 309.6,657 310.9,659 312.2,660.9 313.5,662.9 314.7,664.8 315.9,666.7 317.2,668.5 318.4,670.4 319.5,672.2 320.7,674 321.9,675.8 323,677.6 324.2,679.4 325.3,681.1 326.4,682.8 327.5,684.5 328.5,686.2 329.6,687.9 330.6,689.5 331.7,691.2 332.7,692.8 333.7,694.4 334.7,696 335.7,697.6 336.7,699.1 337.6,700.7 338.6,702.2 339.5,703.8 340.4,705.3 341.3,706.8 342.2,708.2 343.1,709.7 344,711.2 344.8,712.6 345.7,714 346.5,715.5 347.4,716.9 348.2,718.3 349,719.7 349.8,721 350.6,722.4 351.3,723.7 352.1,725.1 352.9,726.4 353.6,727.7 354.4,729.1 355.1,730.4 355.8,731.6 356.5,732.9 357.2,734.2 357.9,735.5 358.6,736.7 359.3,738 359.9,739.2 360.6,740.4 361.2,741.6 361.9,742.8 362.5,744 363.1,745.2 363.8,746.4 364.4,747.6 365,748.7 365.6,749.9 366.2,751 366.8,752.2" fill="none" stroke="#000090" stroke-width="1" />
<polyline points="367.6,22.3 363.6,31.8 359.9,41.1 356.3,50.1 352.9,58.8 349.7,67.3 346.6,75.6 343.6,83.7 340.8,91.6 338.1,99.3 335.6,106.8 333.1,114.1 330.8,121.3 328.6,128.3 326.4,135.1 324.4,141.8 322.5,148.3 320.6,154.7 318.9,160.9 317.2,167 315.6,173 314.1,178.9 312.6,184.7 311.3,190.3 310,195.8 308.7,201.3 307.5,206.6 306.4,211.8 305.3,216.9 304.3,221.9 303.3,226.9 302.4,231.7 301.6,236.5 300.8,241.2 300,245.8 299.3,250.3 298.6,254.8 297.9,259.2 297.3,263.5 296.8,267.7 296.2,271.9 295.7,276 295.3,280 294.9,284 294.5,287.9 294.1,291.8 293.8,295.6 293.5,299.3 293.2,303 293,306.6 292.7,310.2 292.6,313.8 292.4,317.2 292.2,320.7 292.1,324.1 292,327.4 291.9,330.7 291.9,334 291.9,337.2 291.8,340.4 291.8,343.5 291.9,346.6 291.9,349.6 292,352.6 292.1,355.6 292.1,358.6 292.3,361.5 292.4,364.3 292.5,367.2 292.7,370 292.9,372.7 293,375.5 293.2,378.2 293.4,380.8 293.7,383.5 293.9,386.1 294.2,388.7 294.4,391.2 294.7,393.8 295.6,401.2 296.5,408.3 297.6,415.3 298.7,422.1 299.9,428.6 301.2,435 302.5,441.1 303.9,447.1 305.3,453 306.8,458.7 308.2,464.2 309.8,469.6 311.3,474.9 312.9,480 314.5,485 316.2,489.9 317.8,494.7 319.5,499.4 321.1,503.9 322.8,508.4 324.5,512.8 326.2,517 327.8,521.2 329.5,525.3 331.2,529.3 332.9,533.3 334.5,537.1 336.2,540.9 337.9,544.6 339.5,548.2 341.1,551.8 342.7,555.3 344.3,558.8 345.9,562.2 347.5,565.5 349,568.7 350.6,572 352.1,575.1 353.6,578.2 355,581.3 356.5,584.3 357.9,587.2 359.3,590.1 360.7,593 362.1,595.8 363.4,598.6 364.8,601.3 366.1,604 367.4,606.7 368.6,609.3 369.9,611.9 371.1,614.4 372.3,617 373.5,619.4 374.6,621.9 375.8,624.3 376.9,626.7 378,629 379,631.3 380.1,633.6 381.1,635.9 382.2,638.1 383.2,640.3 384.1,642.5 385.1,644.6 386,646.7 387,648.8 387.9,650.9 388.8,653 389.7,655 390.5,657 391.4,659 392.2,660.9 393,662.9 393.8,664.8 394.6,666.7 395.4,668.5 396.1,670.4 396.9,672.2 397.6,674 398.3,675.8 399,677.6 399.7,679.4 400.4,681.1 401.1,682.8 401.7,684.5 402.4,686.2 403,687.9 403.6,689.5 404.2,691.2 404.8,692.8 405.4,694.4 406,696 406.6,697.6 407.1,699.1 407.7,700.7 408.2,702.2 408.8,703.8 409.3,705.3 409.8,706.8 410.3,708.2 410.8,709.7 411.3,711.2 411.8,712.6 412.3,714 412.8,715.5 413.2,716.9 413.7,718.3 414.2,719.7 414.6,721 415,722.4 415.5,723.7 415.9,725.1 416.3,726.4 416.7,727.7 417.1,729.1 417.6,730.4 418,731.6 418.3,732.9 418.7,734.2 419.1,735.5 419.5,736.7 419.9,738 420.2,739.2 420.6,740.4 420.9,741.6 421.3,742.8 421.6,744 422,745.2 422.3,746.4 422.7,747.6 423,748.7 423.3,749.9 423.7,751 424,752.2" fill="none" stroke="#000090" stroke-width="1" />
<polyline points="461.6,22.3 458.3,31.8 455.1,41.1 452.1,50.1 449.2,58.8 446.5,67.3 443.9,75.6 441.5,83.7 439.2,91.6 437,99.3 434.9,106.8 433,114.1 431.1,121.3 429.4,128.3 427.8,135.1 426.2,141.8 424.7,148.3 423.3,154.7 422,160.9 420.8,167 419.7,173 418.6,178.9 417.6,184.7 416.6,190.3 415.7,195.8 414.9,201.3 414.1,206.6 413.4,211.8 412.7,216.9 412.1,221.9 411.5,226.9 411,231.7 410.5,236.5 410.1,241.2 409.7,245.8 409.4,250.3 409,254.8 408.8,259.2 408.5,263.5 408.3,267.7 408.1,271.9 408,276 407.9,280 407.8,284 407.7,287.9 407.7,291.8 407.7,295.6 407.7,299.3 407.8,303 407.8,306.6 407.9,310.2 408,313.8 408.2,317.2 408.3,320.7 408.5,324.1 408.7,327.4 408.9,330.7 409.1,334 409.3,337.2 409.6,340.4 409.9,343.5 410.1,346.6 410.4,349.6 410.8,352.6 411.1,355.6 411.4,358.6 411.7,361.5 412.1,364.3 412.5,367.2 412.8,370 413.2,372.7 413.6,375.5 414,378.2 414.4,380.8 414.8,383.5 415.3,386.1 415.7,388.7 416.1,391.2 416.6,393.8 417.9,401.2 419.3,408.3 420.7,415.3 422.2,422.1 423.6,428.6 425.1,435 426.6,441.1 428,447.1 429.5,453 430.9,458.7 432.3,464.2 433.7,469.6 435.1,474.9 436.5,480 437.8,485 439.1,489.9 440.4,494.7 441.6,499.4 442.8,503.9 444,508.4 445.1,512.8 446.3,517 447.3,521.2 448.4,525.3 449.4,529.3 450.4,533.3 451.3,537.1 452.2,540.9 453.1,544.6 453.9,548.2 454.8,551.8 455.6,555.3 456.3,558.8 457.1,562.2 457.8,565.5 458.5,568.7 459.2,572 459.8,575.1 460.4,578.2 461.1,581.3 461.6,584.3 462.2,587.2 462.8,590.1 463.3,593 463.8,595.8 464.3,598.6 464.8,601.3 465.2,604 465.7,606.7 466.1,609.3 466.5,611.9 466.9,614.4 467.3,617 467.7,619.4 468.1,621.9 468.4,624.3 468.8,626.7 469.1,629 469.5,631.3 469.8,633.6 470.1,635.9 470.4,638.1 470.7,640.3 471,642.5 471.2,644.6 471.5,646.7 471.8,648.8 472,650.9 472.3,653 472.5,655 472.8,657 473,659 473.2,660.9 473.5,662.9 473.7,664.8 473.9,666.7 474.1,668.5 474.3,670.4 474.5,672.2 474.7,674 474.9,675.8 475,677.6 475.2,679.4 475.4,681.1 475.6,682.8 475.7,684.5 475.9,686.2 476.1,687.9 476.2,689.5 476.4,691.2 476.5,692.8 476.7,694.4 476.8,696 477,697.6 477.1,699.1 477.3,700.7 477.4,702.2 477.6,703.8 477.7,705.3 477.8,706.8 478,708.2 478.1,709.7 478.2,711.2 478.3,712.6 478.5,714 478.6,715.5 478.7,716.9 478.8,718.3 478.9,719.7 479,721 479.2,722.4 479.3,723.7 479.4,725.1 479.5,726.4 479.6,727.7 479.7,729.1 479.8,730.4 479.9,731.6 480,732.9 480.1,734.2 480.2,735.5 480.3,736.7 480.4,738 480.5,739.2 480.6,740.4 480.7,741.6 480.8,742.8 480.9,744 481,745.2 481.1,746.4 481.1,747.6 481.2,748.7 481.3,749.9 481.4,751 481.5,752.2" fill="none" stroke="#000090" stroke-width="1" />
<polyline points="616.6,22.3 614.1,31.8 611.8,41.1 609.7,50.1 607.7,58.8 605.8,67.3 604.1,75.6 602.4,83.7 600.9,91.6 599.5,99.3 598.2,106.8 597,114.1 595.8,121.3 594.8,128.3 593.8,135.1 592.9,141.8 592.1,148.3 591.3,154.7 590.6,160.9 590,167 589.4,173 588.8,178.9 588.4,184.7 587.9,190.3 587.5,195.8 587.1,201.3 586.8,206.6 586.4,211.8 586.2,216.9 585.9,221.9 585.7,226.9 585.5,231.7 585.3,236.5 585.1,241.2 585,245.8 584.8,250.3 584.7,254.8 584.6,259.2 584.5,263.5 584.4,267.7 584.3,271.9 584.3,276 584.2,280 584.1,284 584.1,287.9 584,291.8 584,295.6 583.9,299.3 583.9,303 583.8,306.6 583.8,310.2 583.7,313.8 583.7,317.2 583.6,320.7 583.6,324.1 583.5,327.4 583.4,330.7 583.4,334 583.3,337.2 583.3,340.4 583.2,343.5 583.1,346.6 583,349.6 582.9,352.6 582.9,355.6 582.8,358.6 582.7,361.5 582.6,364.3 582.5,367.2 582.4,370 582.3,372.7 582.2,375.5 582,378.2 581.9,380.8 581.8,383.5 581.7,386.1 581.5,388.7 581.4,391.2 581.3,393.8 580.8,401.2 580.4,408.3 579.9,415.3 579.4,422.1 578.9,428.6 578.4,435 577.8,441.1 577.3,447.1 576.7,453 576.1,458.7 575.5,464.2 574.9,469.6 574.4,474.9 573.8,480 573.2,485 572.6,489.9 572,494.7 571.4,499.4 570.8,503.9 570.3,508.4 569.7,512.8 569.1,517 568.6,521.2 568,525.3 567.5,529.3 566.9,533.3 566.4,537.1 565.9,540.9 565.3,544.6 564.8,548.2 564.3,551.8 563.8,555.3 563.3,558.8 562.9,562.2 562.4,565.5 561.9,568.7 561.4,572 561,575.1 560.5,578.2 560.1,581.3 559.7,584.3 559.2,587.2 558.8,590.1 558.4,593 558,595.8 557.6,598.6 557.2,601.3 556.8,604 556.5,606.7 556.1,609.3 555.7,611.9 555.4,614.4 555,617 554.7,619.4 554.3,621.9 554,624.3 553.7,626.7 553.3,629 553,631.3 552.7,633.6 552.4,635.9 552.1,638.1 551.8,640.3 551.5,642.5 551.2,644.6 550.9,646.7 550.7,648.8 550.4,650.9 550.1,653 549.9,655 549.6,657 549.4,659 549.1,660.9 548.9,662.9 548.6,664.8 548.4,666.7 548.2,668.5 547.9,670.4 547.7,672.2 547.5,674 547.3,675.8 547.1,677.6 546.9,679.4 546.6,681.1 546.4,682.8 546.2,684.5 546.1,686.2 545.9,687.9 545.7,689.5 545.5,691.2 545.3,692.8 545.1,694.4 544.9,696 544.8,697.6 544.6,699.1 544.4,700.7 544.3,702.2 544.1,703.8 543.9,705.3 543.8,706.8 543.6,708.2 543.5,709.7 543.3,711.2 543.2,712.6 543,714 542.9,715.5 542.8,716.9 542.6,718.3 542.5,719.7 542.4,721 542.2,722.4 542.1,723.7 542,725.1 541.8,726.4 541.7,727.7 541.6,729.1 541.5,730.4 541.4,731.6 541.2,732.9 541.1,734.2 541,735.5 540.9,736.7 540.8,738 540.7,739.2 540.6,740.4 540.5,741.6 540.4,742.8 540.3,744 540.2,745.2 540.1,746.4 540,747.6 539.9,748.7 539.8,749.9 539.7,751 539.6,752.2" fill="none" stroke="#000090" stroke-width="1" />
<polyline points="871.3,22.3 867.9,31.8 864.5,41.1 861.2,50.1 858,58.8 854.8,67.3 851.7,75.6 848.6,83.7 845.5,91.6 842.5,99.3 839.6,106.8 836.7,114.1 833.8,121.3 831,128.3 828.3,135.1 825.5,141.8 822.9,148.3 820.2,154.7 817.6,160.9 815.1,167 812.6,173 810.1,178.9 807.7,184.7 805.3,190.3 802.9,195.8 800.6,201.3 798.3,206.6 796.1,211.8 793.9,216.9 791.7,221.9 789.5,226.9 787.4,231.7 785.3,236.5 783.3,241.2 781.3,245.8 779.3,250.3 777.4,254.8 775.4,259.2 773.5,263.5 771.7,267.7 769.8,271.9 768,276 766.3,280 764.5,284 762.8,287.9 761.1,291.8 759.4,295.6 757.7,299.3 756.1,303 754.5,306.6 752.9,310.2 751.4,313.8 749.8,317.2 748.3,320.7 746.8,324.1 745.4,327.4 743.9,330.7 742.5,334 741.1,337.2 739.7,340.4 738.3,343.5 736.9,346.6 735.6,349.6 734.3,352.6 733,355.6 731.7,358.6 730.4,361.5 729.2,364.3 727.9,367.2 726.7,370 725.5,372.7 724.3,375.5 723.2,378.2 722,380.8 720.9,383.5 719.7,386.1 718.6,388.7 717.5,391.2 716.4,393.8 713.3,401.2 710.2,408.3 707.3,415.3 704.4,422.1 701.7,428.6 699,435 696.4,441.1 693.9,447.1 691.5,453 689.2,458.7 687,464.2 684.8,469.6 682.7,474.9 680.6,480 678.6,485 676.7,489.9 674.8,494.7 673,499.4 671.2,503.9 669.5,508.4 667.8,512.8 666.2,517 664.6,521.2 663.1,525.3 661.6,529.3 660.1,533.3 658.7,537.1 657.3,540.9 656,544.6 654.7,548.2 653.4,551.8 652.1,555.3 650.9,558.8 649.7,562.2 648.6,565.5 647.4,568.7 646.3,572 645.3,575.1 644.2,578.2 643.2,581.3 642.2,584.3 641.2,587.2 640.2,590.1 639.3,593 638.4,595.8 637.5,598.6 636.6,601.3 635.7,604 634.9,606.7 634,609.3 633.2,611.9 632.4,614.4 631.7,617 630.9,619.4 630.2,621.9 629.4,624.3 628.7,626.7 628,629 627.3,631.3 626.7,633.6 626,635.9 625.3,638.1 624.7,640.3 624.1,642.5 623.5,644.6 622.9,646.7 622.3,648.8 621.7,650.9 621.1,653 620.6,655 620,657 619.5,659 619,660.9 618.4,662.9 617.9,664.8 617.4,666.7 616.9,668.5 616.5,670.4 616,672.2 615.5,674 615.1,675.8 614.6,677.6 614.2,679.4 613.7,681.1 613.3,682.8 612.9,684.5 612.4,686.2 612,687.9 611.6,689.5 611.2,691.2 610.9,692.8 610.5,694.4 610.1,696 609.7,697.6 609.4,699.1 609,700.7 608.6,702.2 608.3,703.8 607.9,705.3 607.6,706.8 607.3,708.2 607,709.7 606.6,711.2 606.3,712.6 606,714 605.7,715.5 605.4,716.9 605.1,718.3 604.8,719.7 604.5,721 604.2,722.4 603.9,723.7 603.6,725.1 603.4,726.4 603.1,727.7 602.8,729.1 602.6,730.4 602.3,731.6 602.1,732.9 601.8,734.2 601.6,735.5 601.3,736.7 601.1,738 600.8,739.2 600.6,740.4 600.4,741.6 600.1,742.8 599.9,744 599.7,745.2 599.5,746.4 599.2,747.6 599,748.7 598.8,749.9 598.6,751 598.4,752.2" fill="none" stroke="#000090" stroke-width="1" />
<polyline points="1045.3,22.3 1038.8,31.8 1032.4,41.1 1026.2,50.1 1020.2,58.8 1014.4,67.3 1008.8,75.6 1003.3,83.7 998,91.6 992.8,99.3 987.8,106.8 982.8,114.1 978.1,121.3 973.4,128.3 968.9,135.1 964.4,141.8 960.1,148.3 955.9,154.7 951.8,160.9 947.8,167 943.8,173 940,178.9 936.2,184.7 932.6,190.3 929,195.8 925.5,201.3 922.1,206.6 918.7,211.8 915.4,216.9 912.2,221.9 909.1,226.9 906,231.7 903,236.5 900,241.2 897.1,245.8 894.2,250.3 891.4,254.8 888.7,259.2 886,263.5 883.4,267.7 880.8,271.9 878.2,276 875.7,280 873.3,284 870.9,287.9 868.5,291.8 866.2,295.6 863.9,299.3 861.7,303 859.5,306.6 857.3,310.2 855.2,313.8 853.1,317.2 851,320.7 849,324.1 847,327.4 845,330.7 843.1,334 841.2,337.2 839.3,340.4 837.5,343.5 835.6,346.6 833.9,349.6 832.1,352.6 830.4,355.6 828.6,358.6 827,361.5 825.3,364.3 823.7,367.2 822.1,370 820.5,372.7 818.9,375.5 817.4,378.2 815.8,380.8 814.3,383.5 812.8,386.1 811.4,388.7 809.9,391.2 808.5,393.8 804.4,401.2 800.4,408.3 796.5,415.3 792.8,422.1 789.3,428.6 785.9,435 782.5,441.1 779.4,447.1 776.3,453 773.3,458.7 770.4,464.2 767.6,469.6 764.9,474.9 762.3,480 759.8,485 757.3,489.9 754.9,494.7 752.6,499.4 750.4,503.9 748.2,508.4 746.1,512.8 744,517 742,521.2 740.1,525.3 738.2,529.3 736.4,533.3 734.6,537.1 732.8,540.9 731.1,544.6 729.5,548.2 727.9,551.8 726.3,555.3 724.7,558.8 723.2,562.2 721.8,565.5 720.4,568.7 719,572 717.6,575.1 716.3,578.2 715,581.3 713.7,584.3 712.5,587.2 711.3,590.1 710.1,593 708.9,595.8 707.8,598.6 706.7,601.3 705.6,604 704.5,606.7 703.5,609.3 702.4,611.9 701.4,614.4 700.5,617 699.5,619.4 698.6,621.9 697.6,624.3 696.7,626.7 695.8,629 695,631.3 694.1,633.6 693.3,635.9 692.5,638.1 691.6,640.3 690.9,642.5 690.1,644.6 689.3,646.7 688.6,648.8 687.8,650.9 687.1,653 686.4,655 685.7,657 685,659 684.3,660.9 683.7,662.9 683,664.8 682.4,666.7 681.8,668.5 681.1,670.4 680.5,672.2 679.9,674 679.4,675.8 678.8,677.6 678.2,679.4 677.6,681.1 677.1,682.8 676.5,684.5 676,686.2 675.5,687.9 675,689.5 674.5,691.2 674,692.8 673.5,694.4 673,696 672.5,697.6 672,699.1 671.6,700.7 671.1,702.2 670.7,703.8 670.2,705.3 669.8,706.8 669.3,708.2 668.9,709.7 668.5,711.2 668.1,712.6 667.7,714 667.3,715.5 666.9,716.9 666.5,718.3 666.1,719.7 665.7,721 665.3,722.4 665,723.7 664.6,725.1 664.3,726.4 663.9,727.7 663.5,729.1 663.2,730.4 662.9,731.6 662.5,732.9 662.2,734.2 661.9,735.5 661.5,736.7 661.2,738 660.9,739.2 660.6,740.4 660.3,741.6 660,742.8 659.7,744 659.4,745.2 659.1,746.4 658.8,747.6 658.5,748.7 658.2,749.9 658,751 657.7,752.2" fill="none" stroke="#000090" stroke-width="1" />
<line x1="121.5" y1="50" x2="121.5" y2="749" stroke="#006e00" stroke-width="1"/>
<line x1="181.5" y1="50" x2="181.5" y2="749" stroke="#006e00" stroke-width="1"/>
<line x1="241.5" y1="50" x2="241.5" y2="749" stroke="#006e00" stroke-width="1"/>
<line x1="301.5" y1="50" x2="301.5" y2="749" stroke="#006e00" stroke-width="1"/>
<line x1="361.5" y1="50" x2="361.5" y2="749" stroke="#006e00" stroke-width="1"/>
<line x1="421.5" y1="50" x2="421.5" y2="749" stroke="#006e00" stroke-width="1"/>
<line x1="481.5" y1="50" x2="481.5" y2="749" stroke="#006e00" stroke-width="1"/>
<line x1="541.5" y1="50" x2="541.5" y2="749" stroke="#006e00" stroke-width="1"/>
<line x1="601.5" y1="50" x2="601.5" y2="749" stroke="#006e00" stroke-width="1"/>
<line x1="-667.5" y1="749.5" x2="31.5" y2="50.5" stroke="#fff" stroke-width="1"/>
<line x1="-607.5" y1="749.5" x2="91.5" y2="50.5" stroke="#fff" stroke-width="1"/>
<line x1="-547.5" y1="749.5" x2="151.5" y2="50.5" stroke="#fff" stroke-width="1"/>
<line x1="-487.5" y1="749.5" x2="211.5" y2="50.5" stroke="#fff" stroke-width="1"/>
<line x1="-427.5" y1="749.5" x2="271.5" y2="50.5" stroke="#fff" stroke-width="1"/>
<line x1="-367.5" y1="749.5" x2="331.5" y2="50.5" stroke="#fff" stroke-width="1"/>
<line x1="-307.5" y1="749.5" x2="391.5" y2="50.5" stroke="#fff" stroke-width="1"/>
<line x1="-247.5" y1="749.5" x2="451.5" y2="50.5" stroke="#fff" stroke-width="1"/>
<line x1="-187.5" y1="749.5" x2="511.5" y2="50.5" stroke="#fff" stroke-width="1"/>
<line x1="-127.5" y1="749.5" x2="571.5" y2="50.5" stroke="#fff" stroke-width="1"/>
<line x1="-67.5" y1="749.5" x2="631.5" y2="50.5" stroke="#fff" stroke-width="1"/>
<line x1="-7.5" y1="749.5" x2="691.5" y2="50.5" stroke="#fff" stroke-width="1"/>
<line x1="52.5" y1="749.5" x2="751.5" y2="50.5" stroke="#fff" stroke-width="1"/>
<line x1="112.5" y1="749.5" x2="811.5" y2="50.5" stroke="#fff" stroke-width="1"/>
<line x1="172.5" y1="749.5" x2="871.5" y2="50.5" stroke="#fff" stroke-width="1"/>
<line x1="232.5" y1="749.5" x2="931.5" y2="50.5" stroke="#fff" stroke-width="1"/>
<line x1="292.5" y1="749.5" x2="991.5" y2="50.5" stroke="#fff" stroke-width="1"/>
<line x1="352.5" y1="749.5" x2="1051.5" y2="50.5" stroke="#fff" stroke-width="1"/>
<line x1="412.5" y1="749.5" x2="1111.5" y2="50.5" stroke="#fff" stroke-width="1"/>
<line x1="472.5" y1="749.5" x2="1171.5" y2="50.5" stroke="#fff" stroke-width="1"/>
<line x1="532.5" y1="749.5" x2="1231.5" y2="50.5" stroke="#fff" stroke-width="1"/>
<line x1="592.5" y1="749.5" x2="1291.5" y2="50.5" stroke="#fff" stroke-width="1"/>
<line x1="652.5" y1="749.5" x2="1351.5" y2="50.5" stroke="#fff" stroke-width="1"/>
</g>
<line x1="56" y1="50.5" x2="667" y2="50.5" stroke="#fff" stroke-width="1"/>
<line x1="56" y1="321.5" x2="667" y2="321.5" stroke="#fff" stroke-width="1"/>
<line x1="56" y1="449.5" x2="667" y2="449.5" stroke="#fff" stroke-width="1"/>
<line x1="56" y1="529.5" x2="667" y2="529.5" stroke="#fff" stroke-width="1"/>
<line x1="56" y1="586.5" x2="667" y2="586.5" stroke="#fff" stroke-width="1"/>
<line x1="56" y1="630.5" x2="667" y2="630.5" stroke="#fff" stroke-width="1"/>
<line x1="56" y1="665.5" x2="667" y2="665.5" stroke="#fff" stroke-width="1"/>
<line x1="56" y1="694.5" x2="667" y2="694.5" stroke="#fff" stroke-width="1"/>
<line x1="56" y1="719.5" x2="667" y2="719.5" stroke="#fff" stroke-width="1"/>
<line x1="56" y1="740.5" x2="667" y2="740.5" stroke="#fff" stroke-width="1"/>
<line x1="61" y1="749.5" x2="662" y2="749.5" stroke="#fff" stroke-width="1"/>
<line x1="61.5" y1="50" x2="61.5" y2="755" stroke="#fff" stroke-width="1"/>
<line x1="661.5" y1="50" x2="661.5" y2="755" stroke="#fff" stroke-width="1"/>
<line x1="121.5" y1="749" x2="121.5" y2="755" stroke="#fff" stroke-width="1"/>
<line x1="181.5" y1="749" x2="181.5" y2="755" stroke="#fff" stroke-width="1"/>
<line x1="241.5" y1="749" x2="241.5" y2="755" stroke="#fff" stroke-width="1"/>
<line x1="301.5" y1="749" x2="301.5" y2="755" stroke="#fff" stroke-width="1"/>
<line x1="361.5" y1="749" x2="361.5" y2="755" stroke="#fff" stroke-width="1"/>
<line x1="421.5" y1="749" x2="421.5" y2="755" stroke="#fff" stroke-width="1"/>
<line x1="481.5" y1="749" x2="481.5" y2="755" stroke="#fff" stroke-width="1"/>
<line x1="541.5" y1="749" x2="541.5" y2="755" stroke="#fff" stroke-width="1"/>
<line x1="601.5" y1="749" x2="601.5" y2="755" stroke="#fff" stroke-width="1"/>
<g clip-path="url(#pc)" shape-rendering="crispEdges">
<polygon points="458.4,691 449,670.5 447.4,662.6 452.6,660.5 447.9,655.8 432.6,634 430.5,630.5 423.2,608.4 417.9,603.2 428.4,597.9 426.3,590.5 424.2,581 420.5,571.6 419.5,566.3 420,561 416.3,551.6 419.5,545.3 417.4,540 409,510.8 406.5,497 405,488.4 402.4,472.6 399.7,451.6 403.7,450 419.5,501.6 430,545 444.5,595 452.6,639 460,690" fill="#008000"/>
<rect x="61" y="712" width="564" height="1.3" fill="#ff00ff"/>
<polyline points="187.4,50.9 163.2,59.3 217,76.4 247.8,86.3 289.5,101.7 247.8,123 234.6,125.6 206,141.2 217,149.3 319.2,183.8 337.2,204.9 350,209.3 331.3,218.5 325.8,223.3 331.7,229.5 385,279.6 427.2,315.5 421.3,321 456.8,360.5 451.6,369 469.3,385.5 463.4,394 451.6,405.3 434,431.8 427.4,435.1 415.5,442.4 409,450.3 378,466.7 373.4,472 361.6,481.2 349.7,484.5 349.7,488.4 337.9,506.8 343.2,510.8 319.3,545.2 313,550.8 289,560.3 307.3,566 325.7,571 331.3,581.1 319.3,586.8 319.3,590.6 337,597.5 332,599.4 319.3,601.3 307.3,603.2 289.7,606.4 277.7,608.9 284,635.4 199.6,655.2 205,661.1 210.9,663.4 223.2,664.6 223.2,670.4 187.5,690.3 181.6,696.2 193.3,701.9 154.5,706.5 121.7,711.6 108.9,713.3 96.2,718 74.2,726.1 67.8,731.9" fill="none" stroke="#00ff00" stroke-width="1" />
<path d="M161 59.5h5M163.5 57v5M215 76.5h5M217.5 74v5M246 86.5h5M248.5 84v5M288 102.5h5M290.5 100v5M246 123.5h5M248.5 121v5M233 126.5h5M235.5 124v5M204 141.5h5M206.5 139v5M215 149.5h5M217.5 147v5M317 184.5h5M319.5 182v5M335 205.5h5M337.5 203v5M348 209.5h5M350.5 207v5M329 218.5h5M331.5 216v5M324 223.5h5M326.5 221v5M330 230.5h5M332.5 228v5M383 280.5h5M385.5 278v5M425 316.5h5M427.5 314v5M419 321.5h5M421.5 319v5M455 360.5h5M457.5 358v5M450 369.5h5M452.5 367v5M467 386.5h5M469.5 384v5M461 394.5h5M463.5 392v5M450 405.5h5M452.5 403v5M432 432.5h5M434.5 430v5M425 435.5h5M427.5 433v5M414 442.5h5M416.5 440v5M407 450.5h5M409.5 448v5M376 467.5h5M378.5 465v5M371 472.5h5M373.5 470v5M360 481.5h5M362.5 479v5M348 484.5h5M350.5 482v5M348 488.5h5M350.5 486v5M336 507.5h5M338.5 505v5M341 511.5h5M343.5 509v5M317 545.5h5M319.5 543v5M311 551.5h5M313.5 549v5M287 560.5h5M289.5 558v5M305 566.5h5M307.5 564v5M324 571.5h5M326.5 569v5M329 581.5h5M331.5 579v5M317 587.5h5M319.5 585v5M317 591.5h5M319.5 589v5M335 598.5h5M337.5 596v5M330 599.5h5M332.5 597v5M317 601.5h5M319.5 599v5M305 603.5h5M307.5 601v5M288 606.5h5M290.5 604v5M276 609.5h5M278.5 607v5M282 635.5h5M284.5 633v5M198 655.5h5M200.5 653v5M203 661.5h5M205.5 659v5M209 663.5h5M211.5 661v5M221 665.5h5M223.5 663v5M221 670.5h5M223.5 668v5M186 690.5h5M188.5 688v5M180 696.5h5M182.5 694v5M191 702.5h5M193.5 700v5M152 706.5h5M154.5 704v5M120 712.5h5M122.5 710v5M107 713.5h5M109.5 711v5M94 718.5h5M96.5 716v5M72 726.5h5M74.5 724v5M66 732.5h5M68.5 730v5" stroke="#fff" stroke-width="1" fill="none"/>
<polyline points="129.2,50.5 118.2,59.3 90.7,76.4 121.5,86.3 176.4,101.7 135.8,123 123.7,125.6 72.1,141.2 80.9,149.3 200.6,183.8 203.2,204.9 215.5,209.3 192.9,218.5 186.9,223.3 194.4,229.5 261.9,279.1 293.1,315.6 287.8,321.4 323.2,360.8 318.6,368.9 334.1,385.6 327.4,394.4 316.3,405.5 297.7,431.9 290.8,435.3 281.5,442.5 276.3,451.7 250.7,466.5 238.4,472.2 224.2,481.7 212.5,485.5 212.8,489.6 206.2,507.3 215.3,511.4 205.3,529 193,545.2 192,550.8 151.3,560.3 169.6,566.6 189.7,571.1 199.6,581.2 189.2,590.6 202.8,597.3 175,603 157.9,606.7 146.5,609.6 170,635.4 131.2,655.2 156.5,660.6 177.5,663.6 188.5,666 195.2,670.4 132.1,690.1 129.6,696.8 153.3,702.1 163.3,706.9 173.3,711.2 178.1,712.6 203.8,725.5 194.3,732.1" fill="none" stroke="#ff0080" stroke-width="1" />
<path d="M116 59.5h5M118.5 57v5M89 76.5h5M91.5 74v5M120 86.5h5M122.5 84v5M174 102.5h5M176.5 100v5M134 123.5h5M136.5 121v5M122 126.5h5M124.5 124v5M70 141.5h5M72.5 139v5M79 149.5h5M81.5 147v5M199 184.5h5M201.5 182v5M201 205.5h5M203.5 203v5M214 209.5h5M216.5 207v5M191 218.5h5M193.5 216v5M185 223.5h5M187.5 221v5M192 230.5h5M194.5 228v5M260 279.5h5M262.5 277v5M291 316.5h5M293.5 314v5M286 321.5h5M288.5 319v5M321 361.5h5M323.5 359v5M317 369.5h5M319.5 367v5M332 386.5h5M334.5 384v5M325 394.5h5M327.5 392v5M314 406.5h5M316.5 404v5M296 432.5h5M298.5 430v5M289 435.5h5M291.5 433v5M280 442.5h5M282.5 440v5M274 452.5h5M276.5 450v5M249 466.5h5M251.5 464v5M236 472.5h5M238.5 470v5M222 482.5h5M224.5 480v5M210 486.5h5M212.5 484v5M211 490.5h5M213.5 488v5M204 507.5h5M206.5 505v5M213 511.5h5M215.5 509v5M203 529.5h5M205.5 527v5M191 545.5h5M193.5 543v5M190 551.5h5M192.5 549v5M149 560.5h5M151.5 558v5M168 567.5h5M170.5 565v5M188 571.5h5M190.5 569v5M198 581.5h5M200.5 579v5M187 591.5h5M189.5 589v5M201 597.5h5M203.5 595v5M173 603.5h5M175.5 601v5M156 607.5h5M158.5 605v5M144 610.5h5M146.5 608v5M168 635.5h5M170.5 633v5M129 655.5h5M131.5 653v5M154 661.5h5M156.5 659v5M176 664.5h5M178.5 662v5M186 666.5h5M188.5 664v5M193 670.5h5M195.5 668v5M130 690.5h5M132.5 688v5M128 697.5h5M130.5 695v5M151 702.5h5M153.5 700v5M161 707.5h5M163.5 705v5M171 711.5h5M173.5 709v5M176 713.5h5M178.5 711v5M202 726.5h5M204.5 724v5M192 732.5h5M194.5 730v5" stroke="#fff" stroke-width="1" fill="none"/>
<polyline points="62,637 67.8,649.1 69.6,654.9 89.8,660.3 117.6,662.4 122.8,665.3 133.8,670.5 97.4,690.2 108.3,695.4 130.9,698.9 156.4,699.4 171,700.9 190.5,702.1 150,704.4 120,706.4 102,706.4 96.2,709.9 96.2,724.9 65.5,731.9" fill="none" stroke="#ff8000" stroke-width="1" />
<path d="M66 649.5h5M68.5 647v5M68 655.5h5M70.5 653v5M88 660.5h5M90.5 658v5M116 662.5h5M118.5 660v5M121 665.5h5M123.5 663v5M132 670.5h5M134.5 668v5M95 690.5h5M97.5 688v5M106 695.5h5M108.5 693v5M129 699.5h5M131.5 697v5M154 699.5h5M156.5 697v5M169 701.5h5M171.5 699v5M188 702.5h5M190.5 700v5M148 704.5h5M150.5 702v5M118 706.5h5M120.5 704v5M100 706.5h5M102.5 704v5M94 710.5h5M96.5 708v5M94 725.5h5M96.5 723v5M64 732.5h5M66.5 730v5" stroke="#fff" stroke-width="1" fill="none"/>
<polyline points="62.6,646.2 62.6,669.4 72.5,690.2 69.6,696.6 63.8,701.8 92.7,707 103.1,709.9 120,718.3 133.8,725.5 182.9,728.8 211.4,731.7 231.9,732.1" fill="none" stroke="#ffff00" stroke-width="1" />
<path d="M61 669.5h5M63.5 667v5M70 690.5h5M72.5 688v5M68 697.5h5M70.5 695v5M62 702.5h5M64.5 700v5M91 707.5h5M93.5 705v5M101 710.5h5M103.5 708v5M118 718.5h5M120.5 716v5M132 726.5h5M134.5 724v5M181 729.5h5M183.5 727v5M209 732.5h5M211.5 730v5M230 732.5h5M232.5 730v5" stroke="#fff" stroke-width="1" fill="none"/>
<polyline points="196.5,726 205.7,723.6 250,717.4 280,712 286.4,711.4 312.3,709.4 327.2,707.7 336.9,706.8 347.5,705 355.4,703.7 367.7,701.5 359.8,696.7 365,690.5 369.4,684.8 378.2,670.3 384.8,665.5 375.6,661.5 379,657" fill="none" stroke="#c8c800" stroke-width="1" />
<path d="M195 726.5h5M197.5 724v5M278 712.5h5M280.5 710v5M284 711.5h5M286.5 709v5M325 708.5h5M327.5 706v5M366 702.5h5M368.5 700v5M358 697.5h5M360.5 695v5M363 690.5h5M365.5 688v5M376 670.5h5M378.5 668v5M383 666.5h5M385.5 664v5M374 662.5h5M376.5 660v5" stroke="#fff" stroke-width="1" fill="none"/>
<polyline points="458.4,732.6 454.2,725.3 455.8,710.5 452.6,706.3 432.6,702.1 441,696.8 445.3,690.5 431.6,671 431,664.2 413.7,661.6 416.8,660 424.2,655.8 432.5,635 422,618 416.8,609.5 409.6,606.4 325,602.6 320.6,600.7 343.3,597.5 397,590.4 338.3,581.1 343.3,571 390,566.6 362.9,562.2 400.8,559.7 401.4,551.5 397.6,548.9 392,545.2 405,512 387.9,506.8 372,488.4 373.4,485 339.2,481.2 381.3,472.6 377.4,466.7 381.3,451 353.7,442.4 373.4,435.1 352.4,432.5 360.1,405.3 351.6,394 363.4,385.5 360.8,369 329.9,359.9 341.7,321 355.5,315.5 362.6,279 397.5,229.6 389,225 386.3,223.7 386.3,217.8 392.2,209.9 396.8,204 415.3,184.2 443.4,149.7 452.2,141.6 468.5,123.9 490.6,101 509,86.3 521.5,76 533.3,59 542.2,50.9" fill="none" stroke="#00ffff" stroke-width="1" />
<path d="M456 733.5h5M458.5 731v5M452 725.5h5M454.5 723v5M454 710.5h5M456.5 708v5M451 706.5h5M453.5 704v5M431 702.5h5M433.5 700v5M439 697.5h5M441.5 695v5M443 690.5h5M445.5 688v5M430 671.5h5M432.5 669v5M429 664.5h5M431.5 662v5M412 662.5h5M414.5 660v5M415 660.5h5M417.5 658v5M422 656.5h5M424.5 654v5M430 635.5h5M432.5 633v5M420 618.5h5M422.5 616v5M415 610.5h5M417.5 608v5M408 606.5h5M410.5 604v5M323 603.5h5M325.5 601v5M319 601.5h5M321.5 599v5M341 598.5h5M343.5 596v5M395 590.5h5M397.5 588v5M336 581.5h5M338.5 579v5M341 571.5h5M343.5 569v5M388 567.5h5M390.5 565v5M361 562.5h5M363.5 560v5M399 560.5h5M401.5 558v5M399 552.5h5M401.5 550v5M396 549.5h5M398.5 547v5M390 545.5h5M392.5 543v5M403 512.5h5M405.5 510v5M386 507.5h5M388.5 505v5M370 488.5h5M372.5 486v5M371 485.5h5M373.5 483v5M337 481.5h5M339.5 479v5M379 473.5h5M381.5 471v5M375 467.5h5M377.5 465v5M379 451.5h5M381.5 449v5M352 442.5h5M354.5 440v5M371 435.5h5M373.5 433v5M350 432.5h5M352.5 430v5M358 405.5h5M360.5 403v5M350 394.5h5M352.5 392v5M361 386.5h5M363.5 384v5M359 369.5h5M361.5 367v5M328 360.5h5M330.5 358v5M340 321.5h5M342.5 319v5M354 316.5h5M356.5 314v5M361 279.5h5M363.5 277v5M396 230.5h5M398.5 228v5M387 225.5h5M389.5 223v5M384 224.5h5M386.5 222v5M384 218.5h5M386.5 216v5M390 210.5h5M392.5 208v5M395 204.5h5M397.5 202v5M413 184.5h5M415.5 182v5M441 150.5h5M443.5 148v5M450 142.5h5M452.5 140v5M466 124.5h5M468.5 122v5M489 101.5h5M491.5 99v5M507 86.5h5M509.5 84v5M520 76.5h5M522.5 74v5M531 59.5h5M533.5 57v5M540 51.5h5M542.5 49v5" stroke="#fff" stroke-width="1" fill="none"/>
<polyline points="496.3,732.4 480,725.8 467.4,712.6 469.5,701 458.4,691 449,670.5 447.4,662.6 452.6,660.5 447.9,655.8 432.6,634 430.5,630.5 423.2,608.4 417.9,603.2 428.4,597.9 426.3,590.5 424.2,581 420.5,571.6 419.5,566.3 420,561 416.3,551.6 419.5,545.3 417.4,540 409,510.8 406.5,497 405,488.4 402.4,472.6 399.7,451.6 398.4,433.2 397,420 396.3,405.3 400.3,394 403.6,385.5 405.5,369 409.5,360.5 430.5,321 434.5,315.5 474.6,279.2 503,229.8 514.2,223.6 521.6,218.6 548.8,209.2 560.7,204.3 580.5,184.5 611.9,148.9 632.4,141.2 641.5,124.2 661.3,110.3" fill="none" stroke="#ff0000" stroke-width="1" />
<path d="M494 732.5h5M496.5 730v5M478 726.5h5M480.5 724v5M465 713.5h5M467.5 711v5M468 701.5h5M470.5 699v5M456 691.5h5M458.5 689v5M447 670.5h5M449.5 668v5M445 663.5h5M447.5 661v5M451 660.5h5M453.5 658v5M446 656.5h5M448.5 654v5M431 634.5h5M433.5 632v5M428 630.5h5M430.5 628v5M421 608.5h5M423.5 606v5M416 603.5h5M418.5 601v5M426 598.5h5M428.5 596v5M424 590.5h5M426.5 588v5M422 581.5h5M424.5 579v5M418 572.5h5M420.5 570v5M418 566.5h5M420.5 564v5M418 561.5h5M420.5 559v5M414 552.5h5M416.5 550v5M418 545.5h5M420.5 543v5M415 540.5h5M417.5 538v5M407 511.5h5M409.5 509v5M404 497.5h5M406.5 495v5M403 488.5h5M405.5 486v5M400 473.5h5M402.5 471v5M398 452.5h5M400.5 450v5M396 433.5h5M398.5 431v5M395 420.5h5M397.5 418v5M394 405.5h5M396.5 403v5M398 394.5h5M400.5 392v5M402 386.5h5M404.5 384v5M404 369.5h5M406.5 367v5M408 360.5h5M410.5 358v5M428 321.5h5M430.5 319v5M432 316.5h5M434.5 314v5M473 279.5h5M475.5 277v5M501 230.5h5M503.5 228v5M512 224.5h5M514.5 222v5M520 219.5h5M522.5 217v5M547 209.5h5M549.5 207v5M559 204.5h5M561.5 202v5M578 184.5h5M580.5 182v5M610 149.5h5M612.5 147v5M630 141.5h5M632.5 139v5M640 124.5h5M642.5 122v5" stroke="#fff" stroke-width="1" fill="none"/>
<polyline points="500.3,732.2 469.1,713 463.5,690 456.1,639 448,595 433.5,545 423,501.6 407.2,450 400.5,420 399.2,405 394.5,379 389.3,355 387.3,330 386.5,300 387.8,256.6 390.5,234.2 393.8,207.9 395.7,194.7 399.7,183.6 408.5,136.4 416.7,109.9 426.3,76.7 435.1,50" fill="none" stroke="#ffb0ff" stroke-width="1" />
<polyline points="497,732.2 465.6,713 460,690 452.6,639 444.5,595 430,545 419.5,501.6 403.7,450 397,420 395.7,405 391,379 385.8,355 383.8,330 383,300 384.3,256.6 387,234.2 390.3,207.9 392.2,194.7 396.2,183.6 405,136.4 413.2,109.9 422.8,76.7 431.6,50" fill="none" stroke="#ff00ff" stroke-width="1" />
<polyline points="465.6,713 454.3,732.2" fill="none" stroke="#ff00ff" stroke-width="1" />
</g>
<rect x="67.5" y="607.5" width="43" height="17" fill="#000" stroke="#ffff00" stroke-width="1"/>
<text x="89.2" y="621" fill="#ffff00" font-size="13.5" text-anchor="middle" textLength="35.5" lengthAdjust="spacingAndGlyphs" font-family="'Liberation Sans', sans-serif" >CAPE</text>
<rect x="67.5" y="636.5" width="57" height="17" fill="#000" stroke="#ff8000" stroke-width="1"/>
<text x="96.4" y="650" fill="#ff8000" font-size="13.5" text-anchor="middle" textLength="49.5" lengthAdjust="spacingAndGlyphs" font-family="'Liberation Sans', sans-serif" >CINH * 5</text>
<rect x="625.5" y="703.5" width="30" height="17" fill="#000" stroke="#ff00ff" stroke-width="1"/>
<text x="641" y="717" fill="#ff00ff" font-size="13" text-anchor="middle" textLength="21" lengthAdjust="spacingAndGlyphs" font-family="'Liberation Sans', sans-serif" >LCL</text>
<rect x="313" y="705" width="7" height="7" fill="#c8c800"/>
<text x="316.5" y="711.5" fill="#000" font-size="8" text-anchor="middle" font-family="'Liberation Sans', sans-serif" >1</text>
<rect x="366" y="679" width="7" height="7" fill="#c8c800"/>
<text x="369.5" y="685.5" fill="#000" font-size="8" text-anchor="middle" font-family="'Liberation Sans', sans-serif" >2</text>
<rect x="377" y="652" width="7" height="7" fill="#c8c800"/>
<text x="380.5" y="658.5" fill="#000" font-size="8" text-anchor="middle" font-family="'Liberation Sans', sans-serif" >3</text>
<text x="62" y="29" fill="#fff" font-size="16" font-weight="bold" textLength="242" lengthAdjust="spacingAndGlyphs" font-family="'Liberation Sans', sans-serif" >Station: 06610 Payerne (LSMP)</text>
<text x="330" y="29" fill="#fff" font-size="16" font-weight="bold" textLength="128" lengthAdjust="spacingAndGlyphs" font-family="'Liberation Sans', sans-serif" >Date: 02.06.2022</text>
<text x="479.5" y="29" fill="#fff" font-size="16" font-weight="bold" textLength="92" lengthAdjust="spacingAndGlyphs" font-family="'Liberation Sans', sans-serif" >Time: 1200Z</text>
<text x="53" y="55" fill="#fff" font-size="14" text-anchor="end" textLength="19" lengthAdjust="spacingAndGlyphs" font-family="'Liberation Sans', sans-serif" >100</text>
<text x="671" y="55" fill="#fff" font-size="14" textLength="45" lengthAdjust="spacingAndGlyphs" font-family="'Liberation Sans', sans-serif" >16441m</text>
<text x="53" y="326" fill="#fff" font-size="14" text-anchor="end" textLength="19" lengthAdjust="spacingAndGlyphs" font-family="'Liberation Sans', sans-serif" >200</text>
<text x="671" y="326" fill="#fff" font-size="14" textLength="45" lengthAdjust="spacingAndGlyphs" font-family="'Liberation Sans', sans-serif" >12056m</text>
<text x="53" y="454" fill="#fff" font-size="14" text-anchor="end" textLength="19" lengthAdjust="spacingAndGlyphs" font-family="'Liberation Sans', sans-serif" >300</text>
<text x="671" y="454" fill="#fff" font-size="14" textLength="38.5" lengthAdjust="spacingAndGlyphs" font-family="'Liberation Sans', sans-serif" >9425m</text>
<text x="53" y="534" fill="#fff" font-size="14" text-anchor="end" textLength="19" lengthAdjust="spacingAndGlyphs" font-family="'Liberation Sans', sans-serif" >400</text>
<text x="671" y="534" fill="#fff" font-size="14" textLength="38.5" lengthAdjust="spacingAndGlyphs" font-family="'Liberation Sans', sans-serif" >7412m</text>
<text x="53" y="591" fill="#fff" font-size="14" text-anchor="end" textLength="19" lengthAdjust="spacingAndGlyphs" font-family="'Liberation Sans', sans-serif" >500</text>
<text x="671" y="591" fill="#fff" font-size="14" textLength="38.5" lengthAdjust="spacingAndGlyphs" font-family="'Liberation Sans', sans-serif" >5762m</text>
<text x="53" y="635" fill="#fff" font-size="14" text-anchor="end" textLength="19" lengthAdjust="spacingAndGlyphs" font-family="'Liberation Sans', sans-serif" >600</text>
<text x="671" y="635" fill="#fff" font-size="14" textLength="38.5" lengthAdjust="spacingAndGlyphs" font-family="'Liberation Sans', sans-serif" >4360m</text>
<text x="53" y="670" fill="#fff" font-size="14" text-anchor="end" textLength="19" lengthAdjust="spacingAndGlyphs" font-family="'Liberation Sans', sans-serif" >700</text>
<text x="671" y="670" fill="#fff" font-size="14" textLength="38.5" lengthAdjust="spacingAndGlyphs" font-family="'Liberation Sans', sans-serif" >3134m</text>
<text x="53" y="699" fill="#fff" font-size="14" text-anchor="end" textLength="19" lengthAdjust="spacingAndGlyphs" font-family="'Liberation Sans', sans-serif" >800</text>
<text x="671" y="699" fill="#fff" font-size="14" textLength="38.5" lengthAdjust="spacingAndGlyphs" font-family="'Liberation Sans', sans-serif" >2042m</text>
<text x="53" y="724" fill="#fff" font-size="14" text-anchor="end" textLength="19" lengthAdjust="spacingAndGlyphs" font-family="'Liberation Sans', sans-serif" >900</text>
<text x="671" y="724" fill="#fff" font-size="14" textLength="38.5" lengthAdjust="spacingAndGlyphs" font-family="'Liberation Sans', sans-serif" >1052m</text>
<text x="53" y="745" fill="#fff" font-size="14" text-anchor="end" textLength="25.5" lengthAdjust="spacingAndGlyphs" font-family="'Liberation Sans', sans-serif" >1000</text>
<text x="59" y="768" fill="#fff" font-size="14" text-anchor="middle" textLength="17" lengthAdjust="spacingAndGlyphs" font-family="'Liberation Sans', sans-serif" >-50</text>
<text x="119" y="768" fill="#fff" font-size="14" text-anchor="middle" textLength="17" lengthAdjust="spacingAndGlyphs" font-family="'Liberation Sans', sans-serif" >-40</text>
<text x="179" y="768" fill="#fff" font-size="14" text-anchor="middle" textLength="17" lengthAdjust="spacingAndGlyphs" font-family="'Liberation Sans', sans-serif" >-30</text>
<text x="239" y="768" fill="#fff" font-size="14" text-anchor="middle" textLength="17" lengthAdjust="spacingAndGlyphs" font-family="'Liberation Sans', sans-serif" >-20</text>
<text x="299" y="768" fill="#fff" font-size="14" text-anchor="middle" textLength="17" lengthAdjust="spacingAndGlyphs" font-family="'Liberation Sans', sans-serif" >-10</text>
<text x="361.5" y="768" fill="#fff" font-size="14" text-anchor="middle" textLength="6" lengthAdjust="spacingAndGlyphs" font-family="'Liberation Sans', sans-serif" >0</text>
<text x="421.5" y="768" fill="#fff" font-size="14" text-anchor="middle" textLength="12.5" lengthAdjust="spacingAndGlyphs" font-family="'Liberation Sans', sans-serif" >10</text>
<text x="481.5" y="768" fill="#fff" font-size="14" text-anchor="middle" textLength="12.5" lengthAdjust="spacingAndGlyphs" font-family="'Liberation Sans', sans-serif" >20</text>
<text x="541.5" y="768" fill="#fff" font-size="14" text-anchor="middle" textLength="12.5" lengthAdjust="spacingAndGlyphs" font-family="'Liberation Sans', sans-serif" >30</text>
<text x="601.5" y="768" fill="#fff" font-size="14" text-anchor="middle" textLength="12.5" lengthAdjust="spacingAndGlyphs" font-family="'Liberation Sans', sans-serif" >40</text>
<text x="661.5" y="768" fill="#fff" font-size="14" text-anchor="middle" textLength="12.5" lengthAdjust="spacingAndGlyphs" font-family="'Liberation Sans', sans-serif" >50</text>
<text x="361" y="781" fill="#fff" font-size="14" text-anchor="middle" textLength="172.5" lengthAdjust="spacingAndGlyphs" font-family="'Liberation Sans', sans-serif" >Temperature, Dewpoint [ °C]</text>
<line x1="61.5" y1="788" x2="61.5" y2="793" stroke="#fff"/>
<text x="61.5" y="806" fill="#fff" font-size="14" text-anchor="middle" textLength="6" lengthAdjust="spacingAndGlyphs" font-family="'Liberation Sans', sans-serif" >0</text>
<line x1="121.5" y1="788" x2="121.5" y2="793" stroke="#fff"/>
<text x="121.5" y="806" fill="#fff" font-size="14" text-anchor="middle" textLength="12.5" lengthAdjust="spacingAndGlyphs" font-family="'Liberation Sans', sans-serif" >10</text>
<line x1="181.5" y1="788" x2="181.5" y2="793" stroke="#fff"/>
<text x="181.5" y="806" fill="#fff" font-size="14" text-anchor="middle" textLength="12.5" lengthAdjust="spacingAndGlyphs" font-family="'Liberation Sans', sans-serif" >20</text>
<line x1="241.5" y1="788" x2="241.5" y2="793" stroke="#fff"/>
<text x="241.5" y="806" fill="#fff" font-size="14" text-anchor="middle" textLength="12.5" lengthAdjust="spacingAndGlyphs" font-family="'Liberation Sans', sans-serif" >30</text>
<line x1="301.5" y1="788" x2="301.5" y2="793" stroke="#fff"/>
<text x="301.5" y="806" fill="#fff" font-size="14" text-anchor="middle" textLength="12.5" lengthAdjust="spacingAndGlyphs" font-family="'Liberation Sans', sans-serif" >40</text>
<line x1="361.5" y1="788" x2="361.5" y2="793" stroke="#fff"/>
<text x="361.5" y="806" fill="#fff" font-size="14" text-anchor="middle" textLength="12.5" lengthAdjust="spacingAndGlyphs" font-family="'Liberation Sans', sans-serif" >50</text>
<line x1="421.5" y1="788" x2="421.5" y2="793" stroke="#fff"/>
<text x="421.5" y="806" fill="#fff" font-size="14" text-anchor="middle" textLength="12.5" lengthAdjust="spacingAndGlyphs" font-family="'Liberation Sans', sans-serif" >60</text>
<line x1="481.5" y1="788" x2="481.5" y2="793" stroke="#fff"/>
<text x="481.5" y="806" fill="#fff" font-size="14" text-anchor="middle" textLength="12.5" lengthAdjust="spacingAndGlyphs" font-family="'Liberation Sans', sans-serif" >70</text>
<line x1="541.5" y1="788" x2="541.5" y2="793" stroke="#fff"/>
<text x="541.5" y="806" fill="#fff" font-size="14" text-anchor="middle" textLength="12.5" lengthAdjust="spacingAndGlyphs" font-family="'Liberation Sans', sans-serif" >80</text>
<line x1="601.5" y1="788" x2="601.5" y2="793" stroke="#fff"/>
<text x="601.5" y="806" fill="#fff" font-size="14" text-anchor="middle" textLength="12.5" lengthAdjust="spacingAndGlyphs" font-family="'Liberation Sans', sans-serif" >90</text>
<line x1="661.5" y1="788" x2="661.5" y2="793" stroke="#fff"/>
<text x="661.5" y="806" fill="#fff" font-size="14" text-anchor="middle" textLength="19" lengthAdjust="spacingAndGlyphs" font-family="'Liberation Sans', sans-serif" >100</text>
<text x="360" y="819" fill="#fff" font-size="14" text-anchor="middle" textLength="106" lengthAdjust="spacingAndGlyphs" font-family="'Liberation Sans', sans-serif" >Windspeed [ knt]</text>
<line x1="61.5" y1="826" x2="61.5" y2="831" stroke="#fff"/>
<text x="61.5" y="843" fill="#fff" font-size="14" text-anchor="middle" textLength="6" lengthAdjust="spacingAndGlyphs" font-family="'Liberation Sans', sans-serif" >0</text>
<line x1="121.5" y1="826" x2="121.5" y2="831" stroke="#fff"/>
<text x="121.5" y="843" fill="#fff" font-size="14" text-anchor="middle" textLength="19" lengthAdjust="spacingAndGlyphs" font-family="'Liberation Sans', sans-serif" >300</text>
<line x1="181.5" y1="826" x2="181.5" y2="831" stroke="#fff"/>
<text x="181.5" y="843" fill="#fff" font-size="14" text-anchor="middle" textLength="19" lengthAdjust="spacingAndGlyphs" font-family="'Liberation Sans', sans-serif" >600</text>
<line x1="241.5" y1="826" x2="241.5" y2="831" stroke="#fff"/>
<text x="241.5" y="843" fill="#fff" font-size="14" text-anchor="middle" textLength="19" lengthAdjust="spacingAndGlyphs" font-family="'Liberation Sans', sans-serif" >900</text>
<line x1="301.5" y1="826" x2="301.5" y2="831" stroke="#fff"/>
<text x="301.5" y="843" fill="#fff" font-size="14" text-anchor="middle" textLength="25.5" lengthAdjust="spacingAndGlyphs" font-family="'Liberation Sans', sans-serif" >1200</text>
<line x1="361.5" y1="826" x2="361.5" y2="831" stroke="#fff"/>
<text x="361.5" y="843" fill="#fff" font-size="14" text-anchor="middle" textLength="25.5" lengthAdjust="spacingAndGlyphs" font-family="'Liberation Sans', sans-serif" >1500</text>
<line x1="421.5" y1="826" x2="421.5" y2="831" stroke="#fff"/>
<text x="421.5" y="843" fill="#fff" font-size="14" text-anchor="middle" textLength="25.5" lengthAdjust="spacingAndGlyphs" font-family="'Liberation Sans', sans-serif" >1800</text>
<line x1="481.5" y1="826" x2="481.5" y2="831" stroke="#fff"/>
<text x="481.5" y="843" fill="#fff" font-size="14" text-anchor="middle" textLength="25.5" lengthAdjust="spacingAndGlyphs" font-family="'Liberation Sans', sans-serif" >2100</text>
<line x1="541.5" y1="826" x2="541.5" y2="831" stroke="#fff"/>
<text x="541.5" y="843" fill="#fff" font-size="14" text-anchor="middle" textLength="25.5" lengthAdjust="spacingAndGlyphs" font-family="'Liberation Sans', sans-serif" >2400</text>
<line x1="601.5" y1="826" x2="601.5" y2="831" stroke="#fff"/>
<text x="601.5" y="843" fill="#fff" font-size="14" text-anchor="middle" textLength="25.5" lengthAdjust="spacingAndGlyphs" font-family="'Liberation Sans', sans-serif" >2700</text>
<line x1="661.5" y1="826" x2="661.5" y2="831" stroke="#fff"/>
<text x="661.5" y="843" fill="#fff" font-size="14" text-anchor="middle" textLength="25.5" lengthAdjust="spacingAndGlyphs" font-family="'Liberation Sans', sans-serif" >3000</text>
<text x="360.6" y="857" fill="#fff" font-size="14" text-anchor="middle" textLength="136.5" lengthAdjust="spacingAndGlyphs" font-family="'Liberation Sans', sans-serif" >CAPE, CINH * 5 [ J/kg]</text>
<line x1="61.5" y1="863" x2="61.5" y2="868" stroke="#fff"/>
<text x="59" y="879.5" fill="#fff" font-size="14" text-anchor="middle" textLength="23.5" lengthAdjust="spacingAndGlyphs" font-family="'Liberation Sans', sans-serif" >-100</text>
<line x1="136.5" y1="863" x2="136.5" y2="868" stroke="#fff"/>
<text x="134" y="879.5" fill="#fff" font-size="14" text-anchor="middle" textLength="17" lengthAdjust="spacingAndGlyphs" font-family="'Liberation Sans', sans-serif" >-50</text>
<line x1="211.5" y1="863" x2="211.5" y2="868" stroke="#fff"/>
<text x="211.5" y="879.5" fill="#fff" font-size="14" text-anchor="middle" textLength="6" lengthAdjust="spacingAndGlyphs" font-family="'Liberation Sans', sans-serif" >0</text>
<line x1="286.5" y1="863" x2="286.5" y2="868" stroke="#fff"/>
<text x="286.5" y="879.5" fill="#fff" font-size="14" text-anchor="middle" textLength="12.5" lengthAdjust="spacingAndGlyphs" font-family="'Liberation Sans', sans-serif" >50</text>
<line x1="361.5" y1="863" x2="361.5" y2="868" stroke="#fff"/>
<text x="361.5" y="879.5" fill="#fff" font-size="14" text-anchor="middle" textLength="19" lengthAdjust="spacingAndGlyphs" font-family="'Liberation Sans', sans-serif" >100</text>
<line x1="436.5" y1="863" x2="436.5" y2="868" stroke="#fff"/>
<text x="436.5" y="879.5" fill="#fff" font-size="14" text-anchor="middle" textLength="19" lengthAdjust="spacingAndGlyphs" font-family="'Liberation Sans', sans-serif" >150</text>
<line x1="511.5" y1="863" x2="511.5" y2="868" stroke="#fff"/>
<text x="511.5" y="879.5" fill="#fff" font-size="14" text-anchor="middle" textLength="19" lengthAdjust="spacingAndGlyphs" font-family="'Liberation Sans', sans-serif" >200</text>
<line x1="586.5" y1="863" x2="586.5" y2="868" stroke="#fff"/>
<text x="586.5" y="879.5" fill="#fff" font-size="14" text-anchor="middle" textLength="19" lengthAdjust="spacingAndGlyphs" font-family="'Liberation Sans', sans-serif" >250</text>
<line x1="661.5" y1="863" x2="661.5" y2="868" stroke="#fff"/>
<text x="661.5" y="879.5" fill="#fff" font-size="14" text-anchor="middle" textLength="19" lengthAdjust="spacingAndGlyphs" font-family="'Liberation Sans', sans-serif" >300</text>
<text x="361" y="893.5" fill="#fff" font-size="14" text-anchor="middle" textLength="204" lengthAdjust="spacingAndGlyphs" font-family="'Liberation Sans', sans-serif" >Storm Relative Helicity [ m^2/s^2 ]</text>
<text x="761" y="32" fill="#00ff00" font-size="13" text-anchor="middle" font-weight="bold" textLength="28" lengthAdjust="spacingAndGlyphs" font-family="'Liberation Sans', sans-serif" >OBS</text>
<text x="826.5" y="32" fill="#ff0080" font-size="13" text-anchor="middle" font-weight="bold" textLength="17" lengthAdjust="spacingAndGlyphs" font-family="'Liberation Sans', sans-serif" >SR</text>
<rect x="761" y="40" width="1" height="730" fill="#00ff00"/>
<rect x="826" y="40" width="1" height="730" fill="#ff0080"/>
<path d="M761.5 51 L736 64.4M761.5 59.4 L734 70.4M761.5 76 L732.4 81.4M761.5 86.4 L733 93.6M761.5 101.4 L735 113.6M761.5 123 L734 134M761.5 125 L734 136M761.5 141.6 L732 139.6M761.5 149.4 L732 147.4M761.5 184.4 L734 196.4M761.5 204.4 L733 210.4M761.5 209.4 L733 215.4M761.5 218.4 L732 221.4M761.5 223.4 L732 224.4M761.5 229.4 L732 233.4M761.5 279.4 L734 290.4M761.5 315.4 L733 321.4M761.5 321.4 L733 327.4M761.5 360.4 L733 367.4M761.5 369.4 L733 376.4M761.5 385.4 L733 391.4M761.5 394.4 L732 399.4M761.5 405.4 L733 411.4M761.5 432.4 L732 437.4M761.5 435.4 L732 440.4M761.5 442.4 L733 449.4M761.5 450 L733 458M761.5 451 L733 459M761.5 467 L733 475M761.5 472.4 L733 478.4M761.5 481.5 L732 483.5M761.5 482.5 L732 484.5M761.5 486.4 L732 489.4M761.5 489.4 L732 493.4M761.5 507.4 L733 514.4M761.5 511.4 L733 520.4M761.5 530 L733 538.4M761.5 546 L733 554M761.5 550 L736 559M761.5 553 L735 561M761.5 556 L734 563M761.5 559 L732 565M761.5 561 L732 562M761.5 567 L732 569M761.5 571.4 L732.4 576M761.5 581.4 L733 588M761.5 586.4 L733 593M761.5 591.4 L733 598M761.5 597.4 L733 603M761.5 600.4 L733 606M761.5 604.4 L733 610M761.5 607.4 L733 614M761.5 609.4 L733 615.6M761.5 635.4 L735 647.4M761.5 655.4 L736 670M761.5 662 L739 679M761.5 665 L741 682M761.5 668 L743 685M761.5 671 L744 688M761.5 673 L745 693M761.5 691 L736 704.4M761.5 697 L736 710M761.5 702 L739 722M761.5 707 L742 726M761.5 712 L745 736M761.5 732 L732 728M761.5 724 L773 698" stroke="#fff" stroke-width="1" fill="none" shape-rendering="crispEdges"/>
<path d="M826.5 51 L839.6 76.4M826.5 59.4 L848.6 77.6M826.5 76 L813 101M826.5 86.4 L806.4 107.6M826.5 101.4 L809.4 124.4M826.5 124 L814 152.4M826.5 125 L815.6 150M826.5 141.6 L813 118M826.5 149.4 L801 135M826.5 184.4 L806.4 204.4M826.5 204.4 L799.4 215.4M826.5 209.4 L799.4 219.4M826.5 218.4 L797.4 223.4M826.5 223.4 L797 225.4M826.5 229.4 L798 236.4M826.5 279.4 L803.4 296.4M826.5 315.4 L799.4 325.4M826.5 321.4 L799.4 331.4M826.5 360.4 L799.4 370.4M826.5 369.4 L800 379.4M826.5 385.4 L798 394.4M826.5 394.4 L798 402.4M826.5 405.4 L798 414.4M826.5 432.4 L798 440.4M826.5 435.4 L798 442.4M826.5 442.4 L799.4 453.4M826.5 450 L799.4 462M826.5 451 L799.4 463M826.5 467 L800 482.4M826.5 472.4 L800 483.4M826.5 481.5 L797 485.5M826.5 482.5 L797 486.5M826.5 486.4 L798 497.4M826.5 489.4 L799 493M826.5 507.4 L800 520.4M826.5 511.4 L801 526.4M826.5 530 L802.4 545.6M826.5 546 L806 560M826.5 550 L804 562M826.5 556 L801 566M826.5 559 L798 573M826.5 567 L797 569M826.5 571.4 L798 580.4M826.5 581.4 L801 594.4M826.5 586.4 L800 600M826.5 591.4 L800 605M826.5 597.4 L800 610M826.5 604.4 L800 617M826.5 609.4 L801 623.6M826.5 635.4 L809 659M826.5 655.4 L837 690M826.5 662 L835 698M826.5 665 L838 690M826.5 691 L848 726M826.5 697 L840 728M826.5 702 L856 722M826.5 712 L856 721M826.5 724 L856 723M826.5 732 L856 731" stroke="#fff" stroke-width="1" fill="none" shape-rendering="crispEdges"/>
<text x="894" y="39.7" fill="#fff" font-size="12.8" font-family="'Liberation Sans', sans-serif" >Parameter</text>
<rect x="894" y="41.2" width="60" height="1" fill="#fff"/>
<text x="1124" y="39.7" fill="#fff" font-size="12.8" text-anchor="end" font-family="'Liberation Sans', sans-serif" >Value LCL</text>
<rect x="1064" y="41.2" width="60" height="1" fill="#fff"/>
<text x="1214" y="39.7" fill="#fff" font-size="12.8" text-anchor="end" font-family="'Liberation Sans', sans-serif" >Value CCL</text>
<rect x="1152" y="41.2" width="62" height="1" fill="#fff"/>
<text x="1230" y="39.7" fill="#fff" font-size="12.8" font-family="'Liberation Sans', sans-serif" >Unit</text>
<rect x="1230" y="41.2" width="24" height="1" fill="#fff"/>
<text x="894" y="61.7" fill="#fff" font-size="12.8" font-family="'Liberation Sans', sans-serif" >Convective Temperature:</text>
<text x="1124" y="61.7" fill="#ffff00" font-size="12.8" text-anchor="end" font-family="'Liberation Sans', sans-serif" >21.79</text>
<text x="1230" y="61.7" fill="#fff" font-size="12.8" font-family="'Liberation Sans', sans-serif" >[°C]</text>
<text x="894" y="78.8" fill="#fff" font-size="12.8" font-family="'Liberation Sans', sans-serif" >Snowfall Height:</text>
<text x="1124" y="78.8" fill="#fff" font-size="12.8" text-anchor="end" font-family="'Liberation Sans', sans-serif" >3094.52</text>
<text x="1230" y="78.8" fill="#fff" font-size="12.8" font-family="'Liberation Sans', sans-serif" >[m]</text>
<text x="894" y="123.6" fill="#fff" font-size="12.8" font-family="'Liberation Sans', sans-serif" >Lifted Index:</text>
<text x="1124" y="123.6" fill="#ff0000" font-size="12.8" text-anchor="end" font-family="'Liberation Sans', sans-serif" >-2.78</text>
<text x="1214" y="123.6" fill="#ff0000" font-size="12.8" text-anchor="end" font-family="'Liberation Sans', sans-serif" >-3.31</text>
<text x="1230" y="123.6" fill="#fff" font-size="12.8" font-family="'Liberation Sans', sans-serif" >[°C]</text>
<text x="894" y="140.7" fill="#fff" font-size="12.8" font-family="'Liberation Sans', sans-serif" >CAPE ML:</text>
<text x="1124" y="140.7" fill="#ff0000" font-size="12.8" text-anchor="end" font-family="'Liberation Sans', sans-serif" >563.62</text>
<text x="1214" y="140.7" fill="#ffff00" font-size="12.8" text-anchor="end" font-family="'Liberation Sans', sans-serif" >730.28</text>
<text x="1230" y="140.7" fill="#fff" font-size="12.8" font-family="'Liberation Sans', sans-serif" >[J/kg]</text>
<text x="894" y="157.6" fill="#fff" font-size="12.8" font-family="'Liberation Sans', sans-serif" >CINH | LSI (Inversion: 827mB):</text>
<text x="1124" y="157.6" fill="#ff0000" font-size="12.8" text-anchor="end" font-family="'Liberation Sans', sans-serif" >16.79</text>
<text x="1124.5" y="157.6" fill="#fff" font-size="12.8" font-family="'Liberation Sans', sans-serif" >,</text>
<text x="1137" y="157.6" fill="#ff0000" font-size="12.8" font-family="'Liberation Sans', sans-serif" >-0.47</text>
<text x="1230" y="157.6" fill="#fff" font-size="12.8" font-family="'Liberation Sans', sans-serif" >[J/kg], [°C]</text>
<text x="894" y="174.4" fill="#fff" font-size="12.8" font-family="'Liberation Sans', sans-serif" >CAPE SFC:</text>
<text x="1124" y="174.4" fill="#ffff00" font-size="12.8" text-anchor="end" font-family="'Liberation Sans', sans-serif" >850.58</text>
<text x="1214" y="174.4" fill="#ff0000" font-size="12.8" text-anchor="end" font-family="'Liberation Sans', sans-serif" >861.03</text>
<text x="1230" y="174.4" fill="#fff" font-size="12.8" font-family="'Liberation Sans', sans-serif" >[J/kg]</text>
<text x="894" y="191.3" fill="#fff" font-size="12.8" font-family="'Liberation Sans', sans-serif" >CAPE MU | CINH MU:</text>
<text x="1124" y="191.3" fill="#ffff00" font-size="12.8" text-anchor="end" font-family="'Liberation Sans', sans-serif" >850.58</text>
<text x="1124.5" y="191.3" fill="#fff" font-size="12.8" font-family="'Liberation Sans', sans-serif" >,</text>
<text x="1137" y="191.3" fill="#ff0000" font-size="12.8" font-family="'Liberation Sans', sans-serif" >3.51</text>
<text x="1230" y="191.3" fill="#fff" font-size="12.8" font-family="'Liberation Sans', sans-serif" >[J/kg]</text>
<text x="894" y="208.6" fill="#fff" font-size="12.8" font-family="'Liberation Sans', sans-serif" >3km SFC CAPE | IL CAPE:</text>
<text x="1124" y="208.6" fill="#ffff00" font-size="12.8" text-anchor="end" font-family="'Liberation Sans', sans-serif" >73.19</text>
<text x="1124.5" y="208.6" fill="#fff" font-size="12.8" font-family="'Liberation Sans', sans-serif" >,</text>
<text x="1137" y="208.6" fill="#ffff00" font-size="12.8" font-family="'Liberation Sans', sans-serif" >433.02</text>
<text x="1230" y="208.6" fill="#fff" font-size="12.8" font-family="'Liberation Sans', sans-serif" >[J/kg]</text>
<text x="894" y="225.6" fill="#fff" font-size="12.8" font-family="'Liberation Sans', sans-serif" >DCAPE (LFS = 536mB):</text>
<text x="1124" y="225.6" fill="#ffff00" font-size="12.8" text-anchor="end" font-family="'Liberation Sans', sans-serif" >292.66</text>
<text x="1230" y="225.6" fill="#fff" font-size="12.8" font-family="'Liberation Sans', sans-serif" >[J/kg]</text>
<text x="894" y="242.6" fill="#fff" font-size="12.8" font-family="'Liberation Sans', sans-serif" >850-600 Lapse Rate:</text>
<text x="1124" y="242.6" fill="#ffff00" font-size="12.8" text-anchor="end" font-family="'Liberation Sans', sans-serif" >18.68</text>
<text x="1230" y="242.6" fill="#fff" font-size="12.8" font-family="'Liberation Sans', sans-serif" >[°C]</text>
<text x="894" y="259.6" fill="#fff" font-size="12.8" font-family="'Liberation Sans', sans-serif" >FM Hail Size | SHIP | LHP:</text>
<text x="1124" y="259.6" fill="#ffff00" font-size="12.8" text-anchor="end" font-family="'Liberation Sans', sans-serif" >1.3 - 1.9</text>
<text x="1124.5" y="259.6" fill="#fff" font-size="12.8" font-family="'Liberation Sans', sans-serif" >,</text>
<text x="1137" y="259.6" fill="#00ff00" font-size="12.8" font-family="'Liberation Sans', sans-serif" >0.75</text>
<text x="1162.4" y="259.6" fill="#fff" font-size="12.8" font-family="'Liberation Sans', sans-serif" >,</text>
<text x="1173.2" y="259.6" fill="#00ff00" font-size="12.8" font-family="'Liberation Sans', sans-serif" >0.00</text>
<text x="1230" y="259.6" fill="#fff" font-size="12.8" font-family="'Liberation Sans', sans-serif" >[cm], [1], [1]</text>
<text x="894" y="276.6" fill="#fff" font-size="12.8" font-family="'Liberation Sans', sans-serif" >Estofex Exp. Hail Param:</text>
<text x="1124" y="276.6" fill="#ff0000" font-size="12.8" text-anchor="end" font-family="'Liberation Sans', sans-serif" >3.38</text>
<text x="1230" y="276.6" fill="#fff" font-size="12.8" font-family="'Liberation Sans', sans-serif" >[cm]</text>
<text x="894" y="293.6" fill="#fff" font-size="12.8" font-family="'Liberation Sans', sans-serif" >Max. Hail Size (OLD, MU, IL):</text>
<text x="1124" y="293.6" fill="#ff0000" font-size="12.8" text-anchor="end" font-family="'Liberation Sans', sans-serif" >3.62</text>
<text x="1124.5" y="293.6" fill="#fff" font-size="12.8" font-family="'Liberation Sans', sans-serif" >,</text>
<text x="1137" y="293.6" fill="#ff0000" font-size="12.8" font-family="'Liberation Sans', sans-serif" >3.31</text>
<text x="1162.4" y="293.6" fill="#fff" font-size="12.8" font-family="'Liberation Sans', sans-serif" >,</text>
<text x="1173.2" y="293.6" fill="#ff0000" font-size="12.8" font-family="'Liberation Sans', sans-serif" >3.17</text>
<text x="1230" y="293.6" fill="#fff" font-size="12.8" font-family="'Liberation Sans', sans-serif" >[cm]</text>
<text x="894" y="313.7" fill="#fff" font-size="12.8" font-family="'Liberation Sans', sans-serif" >LCL / CCL (AGL):</text>
<text x="1124" y="313.7" fill="#ff0000" font-size="12.8" text-anchor="end" font-family="'Liberation Sans', sans-serif" >853.22</text>
<text x="1214" y="313.7" fill="#ff0000" font-size="12.8" text-anchor="end" font-family="'Liberation Sans', sans-serif" >964.44</text>
<text x="1230" y="313.7" fill="#fff" font-size="12.8" font-family="'Liberation Sans', sans-serif" >[m]</text>
<text x="894" y="330.6" fill="#fff" font-size="12.8" font-family="'Liberation Sans', sans-serif" >Convective Height:</text>
<text x="1124" y="330.6" fill="#ff0000" font-size="12.8" text-anchor="end" font-family="'Liberation Sans', sans-serif" >8.45</text>
<text x="1214" y="330.6" fill="#ff0000" font-size="12.8" text-anchor="end" font-family="'Liberation Sans', sans-serif" >8.97</text>
<text x="1230" y="330.6" fill="#fff" font-size="12.8" font-family="'Liberation Sans', sans-serif" >[km]</text>
<text x="894" y="375.2" fill="#fff" font-size="12.8" font-family="'Liberation Sans', sans-serif" >Showalter Index:</text>
<text x="1124" y="375.2" fill="#ff0000" font-size="12.8" text-anchor="end" font-family="'Liberation Sans', sans-serif" >-1.02</text>
<text x="1230" y="375.2" fill="#fff" font-size="12.8" font-family="'Liberation Sans', sans-serif" >[°C]</text>
<text x="894" y="392.2" fill="#fff" font-size="12.8" font-family="'Liberation Sans', sans-serif" >Modified Thompson Index:</text>
<text x="1124" y="392.2" fill="#ff0000" font-size="12.8" text-anchor="end" font-family="'Liberation Sans', sans-serif" >44.21</text>
<text x="1230" y="392.2" fill="#fff" font-size="12.8" font-family="'Liberation Sans', sans-serif" >[°C]</text>
<text x="894" y="409.1" fill="#fff" font-size="12.8" font-family="'Liberation Sans', sans-serif" >Total Totals Index:</text>
<text x="1124" y="409.1" fill="#ff0000" font-size="12.8" text-anchor="end" font-family="'Liberation Sans', sans-serif" >51.40</text>
<text x="1230" y="409.1" fill="#fff" font-size="12.8" font-family="'Liberation Sans', sans-serif" >[°C]</text>
<text x="894" y="426" fill="#fff" font-size="12.8" font-family="'Liberation Sans', sans-serif" >KO Index:</text>
<text x="1124" y="426" fill="#ff0000" font-size="12.8" text-anchor="end" font-family="'Liberation Sans', sans-serif" >-11.31</text>
<text x="1230" y="426" fill="#fff" font-size="12.8" font-family="'Liberation Sans', sans-serif" >[1]</text>
<text x="894" y="443" fill="#fff" font-size="12.8" font-family="'Liberation Sans', sans-serif" >Craven SigSvr / 1000:</text>
<text x="1124" y="443" fill="#ff0000" font-size="12.8" text-anchor="end" font-family="'Liberation Sans', sans-serif" >10.76</text>
<text x="1230" y="443" fill="#fff" font-size="12.8" font-family="'Liberation Sans', sans-serif" >[m^3/s^3]</text>
<text x="894" y="459.9" fill="#fff" font-size="12.8" font-family="'Liberation Sans', sans-serif" >SCP RM (new, old):</text>
<text x="1124" y="459.9" fill="#ff0000" font-size="12.8" text-anchor="end" font-family="'Liberation Sans', sans-serif" >1.47</text>
<text x="1124.5" y="459.9" fill="#fff" font-size="12.8" font-family="'Liberation Sans', sans-serif" >,</text>
<text x="1137" y="459.9" fill="#ff0000" font-size="12.8" font-family="'Liberation Sans', sans-serif" >1.82</text>
<text x="1230" y="459.9" fill="#fff" font-size="12.8" font-family="'Liberation Sans', sans-serif" >[1]</text>
<text x="894" y="476.8" fill="#fff" font-size="12.8" font-family="'Liberation Sans', sans-serif" >STP (new, old):</text>
<text x="1124" y="476.8" fill="#ff0000" font-size="12.8" text-anchor="end" font-family="'Liberation Sans', sans-serif" >0.25</text>
<text x="1124.5" y="476.8" fill="#fff" font-size="12.8" font-family="'Liberation Sans', sans-serif" >,</text>
<text x="1137" y="476.8" fill="#ff0000" font-size="12.8" font-family="'Liberation Sans', sans-serif" >0.29</text>
<text x="1230" y="476.8" fill="#fff" font-size="12.8" font-family="'Liberation Sans', sans-serif" >[1]</text>
<text x="894" y="493.7" fill="#fff" font-size="12.8" font-family="'Liberation Sans', sans-serif" >SB STP (fix) | CWASP:</text>
<text x="1124" y="493.7" fill="#ff0000" font-size="12.8" text-anchor="end" font-family="'Liberation Sans', sans-serif" >0.60</text>
<text x="1124.5" y="493.7" fill="#fff" font-size="12.8" font-family="'Liberation Sans', sans-serif" >,</text>
<text x="1137" y="493.7" fill="#ffff00" font-size="12.8" font-family="'Liberation Sans', sans-serif" >58.59</text>
<text x="1230" y="493.7" fill="#fff" font-size="12.8" font-family="'Liberation Sans', sans-serif" >[1], [%]</text>
<text x="894" y="510.7" fill="#fff" font-size="12.8" font-family="'Liberation Sans', sans-serif" >DCP | MMP | MSP:</text>
<text x="1124" y="510.7" fill="#ff0000" font-size="12.8" text-anchor="end" font-family="'Liberation Sans', sans-serif" >0.35</text>
<text x="1124.5" y="510.7" fill="#fff" font-size="12.8" font-family="'Liberation Sans', sans-serif" >,</text>
<text x="1137" y="510.7" fill="#ff0000" font-size="12.8" font-family="'Liberation Sans', sans-serif" >93.65</text>
<text x="1169.5" y="510.7" fill="#fff" font-size="12.8" font-family="'Liberation Sans', sans-serif" >,</text>
<text x="1180.3" y="510.7" fill="#00ff00" font-size="12.8" font-family="'Liberation Sans', sans-serif" >55.14</text>
<text x="1230" y="510.7" fill="#fff" font-size="12.8" font-family="'Liberation Sans', sans-serif" >[1], [%], [%]</text>
<text x="894" y="527.6" fill="#fff" font-size="12.8" font-family="'Liberation Sans', sans-serif" >MB Comp | SHERBE:</text>
<text x="1124" y="527.6" fill="#00ff00" font-size="12.8" text-anchor="end" font-family="'Liberation Sans', sans-serif" >0.00</text>
<text x="1124.5" y="527.6" fill="#fff" font-size="12.8" font-family="'Liberation Sans', sans-serif" >,</text>
<text x="1137" y="527.6" fill="#ff0000" font-size="12.8" font-family="'Liberation Sans', sans-serif" >1.14</text>
<text x="1230" y="527.6" fill="#fff" font-size="12.8" font-family="'Liberation Sans', sans-serif" >[1], [1]</text>
<text x="894" y="544.6" fill="#fff" font-size="12.8" font-family="'Liberation Sans', sans-serif" >Exp. Supercell Index CH:</text>
<text x="1124" y="544.6" fill="#ff0000" font-size="12.8" text-anchor="end" font-family="'Liberation Sans', sans-serif" >3.21</text>
<text x="1230" y="544.6" fill="#fff" font-size="12.8" font-family="'Liberation Sans', sans-serif" >[1]</text>
<text x="894" y="561.6" fill="#fff" font-size="12.8" font-family="'Liberation Sans', sans-serif" >SWISS 12 Index:</text>
<text x="1124" y="561.6" fill="#ff0000" font-size="12.8" text-anchor="end" font-family="'Liberation Sans', sans-serif" >-9.51</text>
<text x="1230" y="561.6" fill="#fff" font-size="12.8" font-family="'Liberation Sans', sans-serif" >[1]</text>
<text x="894" y="578.6" fill="#fff" font-size="12.8" font-family="'Liberation Sans', sans-serif" >Precipitable Water:</text>
<text x="1124" y="578.6" fill="#ffff00" font-size="12.8" text-anchor="end" font-family="'Liberation Sans', sans-serif" >29.63</text>
<text x="1230" y="578.6" fill="#fff" font-size="12.8" font-family="'Liberation Sans', sans-serif" >[mm]</text>
<text x="894" y="624.3" fill="#fff" font-size="12.8" font-family="'Liberation Sans', sans-serif" >Storm Direction | Motion:</text>
<text x="1124" y="624.3" fill="#fff" font-size="12.8" text-anchor="end" font-family="'Liberation Sans', sans-serif" >269.26</text>
<text x="1124.5" y="624.3" fill="#fff" font-size="12.8" font-family="'Liberation Sans', sans-serif" >,</text>
<text x="1137" y="624.3" fill="#ffff00" font-size="12.8" font-family="'Liberation Sans', sans-serif" >23.10</text>
<text x="1230" y="624.3" fill="#fff" font-size="12.8" font-family="'Liberation Sans', sans-serif" >[°], [knt]</text>
<text x="894" y="641.1" fill="#fff" font-size="12.8" font-family="'Liberation Sans', sans-serif" >500m Critical Angle:</text>
<text x="1124" y="641.1" fill="#ff0000" font-size="12.8" text-anchor="end" font-family="'Liberation Sans', sans-serif" >80.05</text>
<text x="1230" y="641.1" fill="#fff" font-size="12.8" font-family="'Liberation Sans', sans-serif" >[°]</text>
<text x="894" y="661.3" fill="#fff" font-size="12.8" font-family="'Liberation Sans', sans-serif" >SR Wind Sfc-2km:</text>
<text x="1124" y="661.3" fill="#ff0000" font-size="12.8" text-anchor="end" font-family="'Liberation Sans', sans-serif" >15.68</text>
<text x="1230" y="661.3" fill="#fff" font-size="12.8" font-family="'Liberation Sans', sans-serif" >[knt]</text>
<text x="894" y="678.2" fill="#fff" font-size="12.8" font-family="'Liberation Sans', sans-serif" >SR Wind 4km-6km:</text>
<text x="1124" y="678.2" fill="#ff0000" font-size="12.8" text-anchor="end" font-family="'Liberation Sans', sans-serif" >18.79</text>
<text x="1230" y="678.2" fill="#fff" font-size="12.8" font-family="'Liberation Sans', sans-serif" >[knt]</text>
<text x="894" y="695.1" fill="#fff" font-size="12.8" font-family="'Liberation Sans', sans-serif" >SR Wind 9km-11km:</text>
<text x="1124" y="695.1" fill="#ff0000" font-size="12.8" text-anchor="end" font-family="'Liberation Sans', sans-serif" >41.74</text>
<text x="1230" y="695.1" fill="#fff" font-size="12.8" font-family="'Liberation Sans', sans-serif" >[knt] CL</text>
<text x="894" y="715.2" fill="#fff" font-size="12.8" font-family="'Liberation Sans', sans-serif" >Effective Shear 6000:</text>
<text x="1124" y="715.2" fill="#ff0000" font-size="12.8" text-anchor="end" font-family="'Liberation Sans', sans-serif" >37.10</text>
<text x="1230" y="715.2" fill="#fff" font-size="12.8" font-family="'Liberation Sans', sans-serif" >[knt]</text>
<text x="894" y="735.4" fill="#fff" font-size="12.8" font-family="'Liberation Sans', sans-serif" >Bulk Richardson Number:</text>
<text x="1124" y="735.4" fill="#ffff00" font-size="12.8" text-anchor="end" font-family="'Liberation Sans', sans-serif" >7.41</text>
<text x="1214" y="735.4" fill="#ffff00" font-size="12.8" text-anchor="end" font-family="'Liberation Sans', sans-serif" >9.61</text>
<text x="1230" y="735.4" fill="#fff" font-size="12.8" font-family="'Liberation Sans', sans-serif" >[1]</text>
<text x="894" y="755.6" fill="#fff" font-size="12.8" font-family="'Liberation Sans', sans-serif" >3km Effective SRH:</text>
<text x="1124" y="755.6" fill="#ff0000" font-size="12.8" text-anchor="end" font-family="'Liberation Sans', sans-serif" >112.81</text>
<text x="1230" y="755.6" fill="#fff" font-size="12.8" font-family="'Liberation Sans', sans-serif" >[m^2/s^2]</text>
<text x="894" y="772.4" fill="#fff" font-size="12.8" font-family="'Liberation Sans', sans-serif" >Max 3km SRH (0-2km) | AGL:</text>
<text x="1124" y="772.4" fill="#ff0000" font-size="12.8" text-anchor="end" font-family="'Liberation Sans', sans-serif" >216.04</text>
<text x="1124.5" y="772.4" fill="#fff" font-size="12.8" font-family="'Liberation Sans', sans-serif" >,</text>
<text x="1137" y="772.4" fill="#00ff00" font-size="12.8" font-family="'Liberation Sans', sans-serif" >2000.00</text>
<text x="1230" y="772.4" fill="#fff" font-size="12.8" font-family="'Liberation Sans', sans-serif" >[m^2/s^2], [m]</text>
<text x="894" y="792.6" fill="#fff" font-size="12.8" font-family="'Liberation Sans', sans-serif" >3km Energy Helicity Index:</text>
<text x="1124" y="792.6" fill="#ff0000" font-size="12.8" text-anchor="end" font-family="'Liberation Sans', sans-serif" >0.40</text>
<text x="1214" y="792.6" fill="#ff0000" font-size="12.8" text-anchor="end" font-family="'Liberation Sans', sans-serif" >0.51</text>
<text x="1230" y="792.6" fill="#fff" font-size="12.8" font-family="'Liberation Sans', sans-serif" >[1]</text>
<text x="894" y="809.4" fill="#fff" font-size="12.8" font-family="'Liberation Sans', sans-serif" >3km Vorticity Gen. Pot.:</text>
<text x="1124" y="809.4" fill="#00ff00" font-size="12.8" text-anchor="end" font-family="'Liberation Sans', sans-serif" >0.09</text>
<text x="1214" y="809.4" fill="#00ff00" font-size="12.8" text-anchor="end" font-family="'Liberation Sans', sans-serif" >0.10</text>
<text x="1230" y="809.4" fill="#fff" font-size="12.8" font-family="'Liberation Sans', sans-serif" >[m/s^2]</text>
<text x="894" y="103.3" fill="#fff" font-size="12.8" font-family="'Liberation Sans', sans-serif" >Parcels: Using 50mB mean layer LCL + CCL</text>
<rect x="894" y="104.8" width="259" height="1" fill="#fff"/>
<text x="894" y="356" fill="#fff" font-size="12.8" font-family="'Liberation Sans', sans-serif" >Convective Indices</text>
<rect x="894" y="357.5" width="105" height="1" fill="#fff"/>
<text x="894" y="604" fill="#fff" font-size="12.8" font-family="'Liberation Sans', sans-serif" >Wind Parameters</text>
<rect x="894" y="605.5" width="101" height="1" fill="#fff"/>
<rect x="729" y="827" width="15" height="8" fill="#ff0000"/>
<text x="753" y="835.5" fill="#ff0000" font-size="12.8" font-family="'Liberation Sans', sans-serif" >Temperature Profile</text>
<rect x="729" y="847" width="15" height="8" fill="#00ffff"/>
<text x="753" y="855.5" fill="#00ffff" font-size="12.8" font-family="'Liberation Sans', sans-serif" >Dewpoint Profile</text>
<rect x="729" y="867" width="15" height="8" fill="#00ff00"/>
<text x="753" y="875.5" fill="#00ff00" font-size="12.8" font-family="'Liberation Sans', sans-serif" >OBS Windspeed Profile</text>
<rect x="729" y="887" width="15" height="8" fill="#ff0080"/>
<text x="753" y="895.5" fill="#ff0080" font-size="12.8" font-family="'Liberation Sans', sans-serif" >SR Windspeed Profile</text>
<rect x="729" y="907" width="15" height="8" fill="#c8c800"/>
<text x="753" y="915.5" fill="#c8c800" font-size="12.8" font-family="'Liberation Sans', sans-serif" >Sfc-3km Storm Relative Helicity Profile</text>
<rect x="729" y="927" width="15" height="8" fill="#404000"/>
<text x="753" y="935.5" fill="#404000" font-size="12.8" font-family="'Liberation Sans', sans-serif" >Effective Layer (CAPE &gt;= 100 J/kg)</text>
<rect x="1079" y="827.3" width="15" height="8" fill="#00ff00"/>
<text x="1103" y="835.6" fill="#00ff00" font-size="12.8" font-family="'Liberation Sans', sans-serif" >No / Non Severe Thunderstorms</text>
<rect x="1079" y="847.3" width="15" height="8" fill="#ffff00"/>
<text x="1103" y="855.6" fill="#ffff00" font-size="12.8" font-family="'Liberation Sans', sans-serif" >Scattered / Moderate Thunderstorms</text>
<rect x="1079" y="867.3" width="15" height="8" fill="#ff0000"/>
<text x="1103" y="875.6" fill="#ff0000" font-size="12.8" font-family="'Liberation Sans', sans-serif" >Widespread / Severe Thunderstorms</text>
</svg></body></html>
